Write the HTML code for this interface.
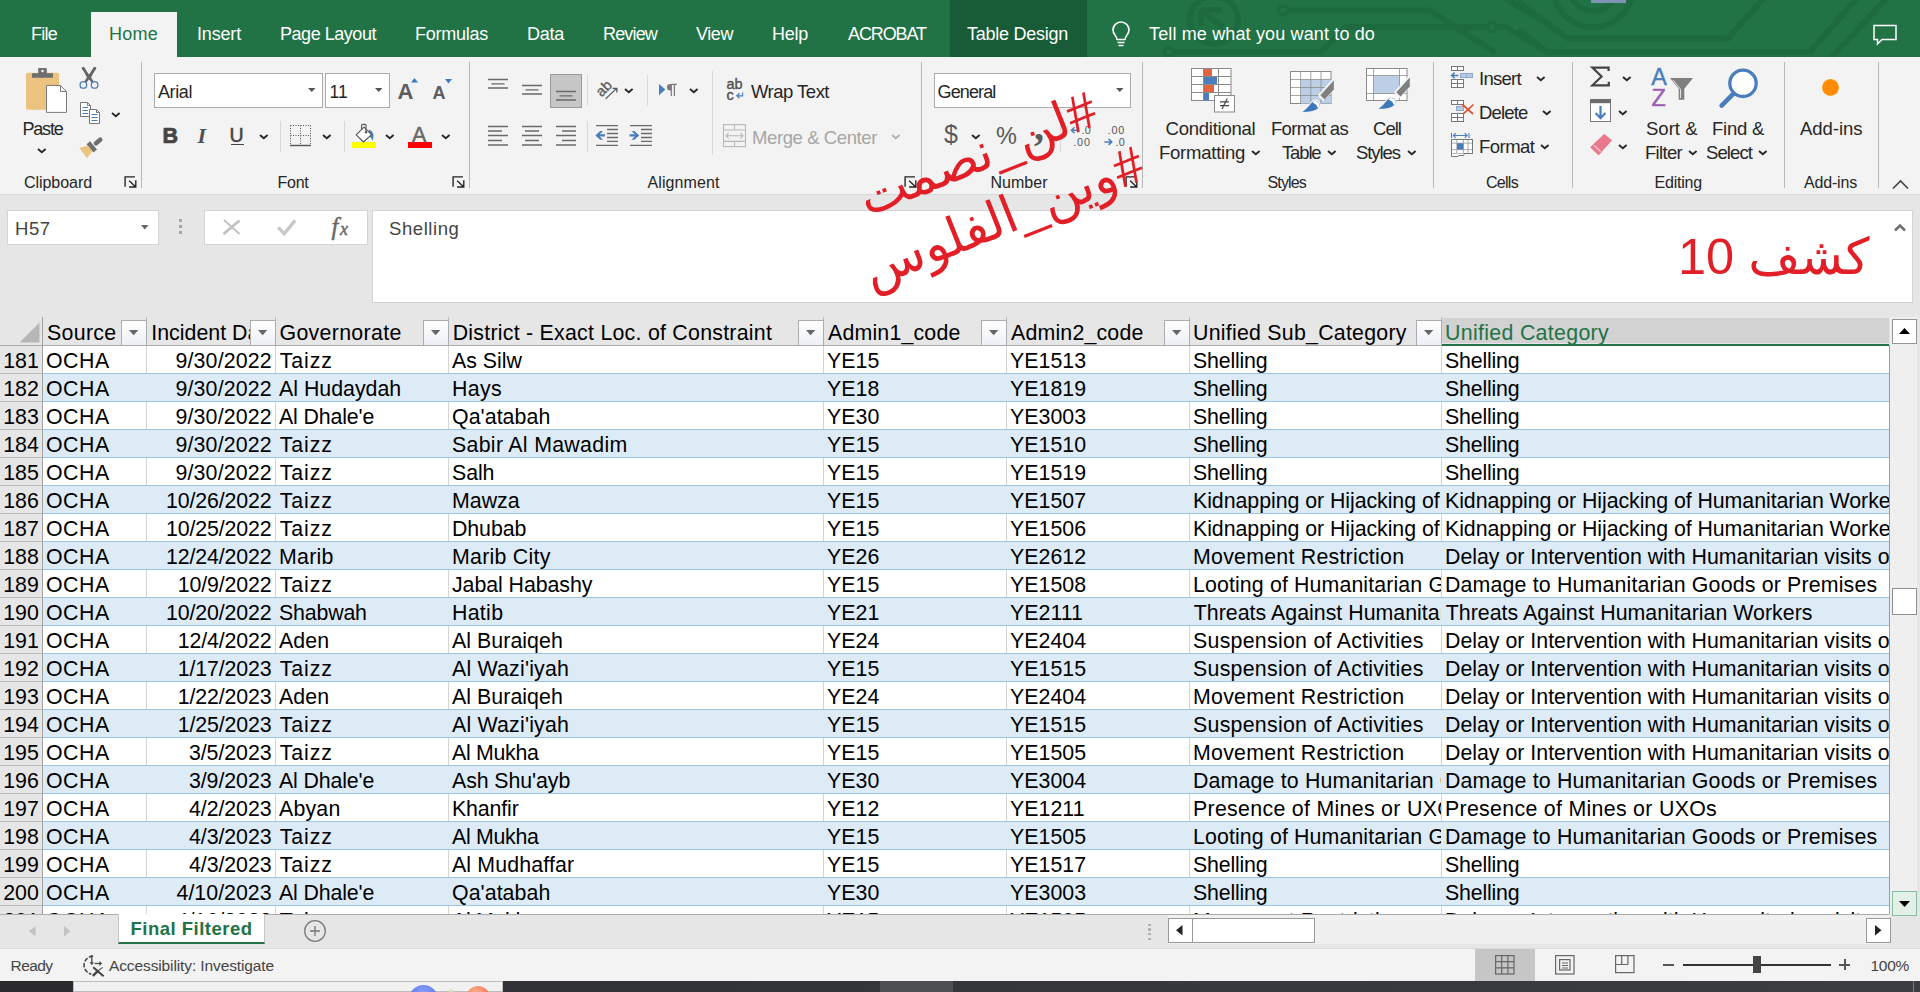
<!DOCTYPE html>
<html lang="en"><head><meta charset="utf-8"><title>Excel</title>
<style>
html,body{margin:0;padding:0;}
body{width:1920px;height:992px;overflow:hidden;position:relative;background:#e6e6e6;font-family:"Liberation Sans",sans-serif;}
.a{position:absolute;}
.t{white-space:pre;}
svg{position:absolute;overflow:visible;}
</style></head><body>
<div class="a" style="left:0px;top:0px;width:1920px;height:57px;background:#217346;"></div>
<svg style="left:1140px;top:0" width="780" height="57" viewBox="1140 0 780 57"><defs><clipPath id="tb"><rect x="1140" y="0" width="780" height="57"/></clipPath></defs>
<g clip-path="url(#tb)" fill="none" stroke="#1e6a3f" stroke-width="6" stroke-linejoin="round">
<circle cx="1214" cy="20" r="24"/>
<path d="M1223 27L1202 11M1201 10H1222M1201 10V26" stroke-width="5.5"/>
<circle cx="1283" cy="10.5" r="4.5" stroke-width="3.5"/>
<path d="M1288 10.5H1430L1496 53"/>
<circle cx="1169" cy="52" r="4.5" stroke-width="3.5"/>
<path d="M1174 52H1321L1346 27H1487"/>
<circle cx="1492" cy="27" r="4.5" stroke-width="3.5"/>
<path d="M1497 27H1506L1542 49"/>
<path d="M1506 -1L1545 22"/>
<circle cx="1593" cy="-12" r="39.5"/>
<circle cx="1593" cy="-12" r="23"/>
<path d="M1518 2L1568 38.5H1728L1763 -1"/>
<path d="M1518 30L1547 52H1810L1856 -1"/>
<path d="M1831 58L1886 -1"/>
</g><rect x="1591" y="0" width="35" height="3" fill="#7f93b5"/></svg>
<div class="a" style="left:91px;top:12px;width:86px;height:46px;background:#f3f3f3;"></div>
<div class="a" style="left:950px;top:0px;width:137px;height:57px;background:#185c37;"></div>
<span class="a t" style="top:24.00px;font-size:18px;line-height:20px;color:#fff;letter-spacing:-0.754px;left:31px;">File</span>
<span class="a t" style="top:24.00px;font-size:18px;line-height:20px;color:#217346;letter-spacing:0.246px;left:109px;">Home</span>
<span class="a t" style="top:24.00px;font-size:18px;line-height:20px;color:#fff;letter-spacing:-0.172px;left:197px;">Insert</span>
<span class="a t" style="top:24.00px;font-size:18px;line-height:20px;color:#fff;letter-spacing:-0.463px;left:280px;">Page Layout</span>
<span class="a t" style="top:24.00px;font-size:18px;line-height:20px;color:#fff;letter-spacing:-0.252px;left:415px;">Formulas</span>
<span class="a t" style="top:24.00px;font-size:18px;line-height:20px;color:#fff;letter-spacing:-0.258px;left:527px;">Data</span>
<span class="a t" style="top:24.00px;font-size:18px;line-height:20px;color:#fff;letter-spacing:-0.839px;left:603px;">Review</span>
<span class="a t" style="top:24.00px;font-size:18px;line-height:20px;color:#fff;letter-spacing:-0.426px;left:696px;">View</span>
<span class="a t" style="top:24.00px;font-size:18px;line-height:20px;color:#fff;letter-spacing:-0.258px;left:772px;">Help</span>
<span class="a t" style="top:24.00px;font-size:18px;line-height:20px;color:#fff;letter-spacing:-1.098px;left:848px;">ACROBAT</span>
<span class="a t" style="top:24.00px;font-size:18px;line-height:20px;color:#fff;letter-spacing:-0.255px;left:967px;">Table Design</span>
<span class="a t" style="top:24.00px;font-size:18px;line-height:20px;color:#fff;letter-spacing:0.144px;left:1149px;">Tell me what you want to do</span>
<svg style="left:1110px;top:21px" width="22" height="28" viewBox="0 0 22 28"><g fill="none" stroke="#fff" stroke-width="1.6">
<path d="M7 18.5C7 15 3 13.5 3 9A8 8 0 0 1 19 9C19 13.5 15 15 15 18.5Z" stroke-linejoin="round"/><path d="M7.5 21.5h7M8.5 24.5h5"/></g></svg>
<svg style="left:1873px;top:24px" width="24" height="22" viewBox="0 0 24 22"><path d="M1 1.5H23V15.5H9L4.5 20V15.5H1Z" fill="none" stroke="#fff" stroke-width="1.5" stroke-linejoin="miter"/></svg>
<div class="a" style="left:0px;top:57px;width:1920px;height:138px;background:#f3f3f3;"></div>
<span class="a t" style="top:119.00px;font-size:18px;line-height:20px;color:#262626;letter-spacing:-1.206px;left:22.5px;">Paste</span>
<svg style="left:37.4px;top:148.4px" width="9.6" height="6.3"><path d="M1 1L4.8 4.3L8.6 1" fill="none" stroke="#262626" stroke-width="1.8"/></svg>
<svg style="left:111.4px;top:112.4px" width="9.6" height="6.3"><path d="M1 1L4.8 4.3L8.6 1" fill="none" stroke="#262626" stroke-width="1.8"/></svg>
<span class="a t" style="top:174.00px;font-size:16px;line-height:17px;color:#262626;letter-spacing:-0.054px;left:24px;">Clipboard</span>
<svg style="left:124px;top:176px" width="13" height="13"><g fill="none" stroke="#222" stroke-width="1.35"><path d="M1.1 10.7V0.9H10.9"/><path d="M5.1 4.7L11.6 10.8M11.8 4.2V11H5.1"/></g></svg>
<div class="a" style="left:141px;top:62px;width:1px;height:126px;background:#b9b9b9;"></div>
<div class="a" style="left:154px;top:73px;width:169px;height:35px;background:#fff;border:1px solid #ababab;box-sizing:border-box;"></div>
<span class="a t" style="top:82.00px;font-size:18px;line-height:20px;color:#262626;letter-spacing:-0.403px;left:158px;">Arial</span>
<svg style="left:308px;top:88px" width="8" height="5"><path d="M0 0H7.5L3.75 4Z" fill="#555"/></svg>
<div class="a" style="left:325px;top:73px;width:65px;height:35px;background:#fff;border:1px solid #ababab;box-sizing:border-box;"></div>
<span class="a t" style="top:82.00px;font-size:17.5px;line-height:20px;color:#262626;left:329.5px;">11</span>
<svg style="left:375px;top:88px" width="8" height="5"><path d="M0 0H7.5L3.75 4Z" fill="#555"/></svg>
<span class="a t" style="top:79.00px;font-size:22px;line-height:25px;color:#5c5c5c;font-weight:700;left:397.5px;">A</span>
<svg style="left:411px;top:78px" width="8" height="5"><path d="M0 4.5H7L3.5 0Z" fill="#3d7ac0"/></svg>
<span class="a t" style="top:83.00px;font-size:18px;line-height:20px;color:#5c5c5c;font-weight:700;left:432.5px;">A</span>
<svg style="left:445px;top:79px" width="8" height="5"><path d="M0 0H7L3.5 4.5Z" fill="#3d7ac0"/></svg>
<span class="a t" style="top:124.00px;font-size:21.5px;line-height:24px;color:#444;font-weight:700;left:162.5px;-webkit-text-stroke:0.7px #444;">B</span>
<span class="a t" style="top:123.00px;font-size:22px;line-height:25px;color:#505050;font-weight:700;font-family:'Liberation Serif', serif;font-style:italic;left:197.5px;">I</span>
<span class="a t" style="top:124.00px;font-size:19.5px;line-height:22px;color:#444;left:229.5px;-webkit-text-stroke:0.5px #444;">U</span>
<div class="a" style="left:230.5px;top:143.5px;width:13.5px;height:1.5px;background:#444;"></div>
<svg style="left:259.4px;top:134.4px" width="9.6" height="6.3"><path d="M1 1L4.8 4.3L8.6 1" fill="none" stroke="#262626" stroke-width="1.8"/></svg>
<div class="a" style="left:280px;top:121px;width:1px;height:31px;background:#d8d8d8;"></div>
<svg style="left:322.4px;top:134.4px" width="9.6" height="6.3"><path d="M1 1L4.8 4.3L8.6 1" fill="none" stroke="#262626" stroke-width="1.8"/></svg>
<div class="a" style="left:344px;top:121px;width:1px;height:31px;background:#d8d8d8;"></div>
<svg style="left:385.4px;top:134.4px" width="9.6" height="6.3"><path d="M1 1L4.8 4.3L8.6 1" fill="none" stroke="#262626" stroke-width="1.8"/></svg>
<svg style="left:441.4px;top:134.4px" width="9.6" height="6.3"><path d="M1 1L4.8 4.3L8.6 1" fill="none" stroke="#262626" stroke-width="1.8"/></svg>
<span class="a t" style="top:174.00px;font-size:16px;line-height:17px;color:#262626;letter-spacing:-0.254px;left:277.5px;">Font</span>
<svg style="left:452px;top:176px" width="13" height="13"><g fill="none" stroke="#222" stroke-width="1.35"><path d="M1.1 10.7V0.9H10.9"/><path d="M5.1 4.7L11.6 10.8M11.8 4.2V11H5.1"/></g></svg>
<div class="a" style="left:469px;top:62px;width:1px;height:126px;background:#b9b9b9;"></div>
<div class="a" style="left:550px;top:74px;width:32px;height:34px;background:#c6c6c6;border:1px solid #9a9a9a;box-sizing:border-box;"></div>
<div class="a" style="left:587px;top:75px;width:1px;height:31px;background:#d8d8d8;"></div>
<svg style="left:624.4px;top:88.4px" width="9.6" height="6.3"><path d="M1 1L4.8 4.3L8.6 1" fill="none" stroke="#262626" stroke-width="1.8"/></svg>
<div class="a" style="left:647px;top:75px;width:1px;height:31px;background:#d8d8d8;"></div>
<svg style="left:689.4px;top:88.4px" width="9.6" height="6.3"><path d="M1 1L4.8 4.3L8.6 1" fill="none" stroke="#262626" stroke-width="1.8"/></svg>
<div class="a" style="left:712px;top:71px;width:1px;height:84px;background:#d8d8d8;"></div>
<span class="a t" style="top:81.00px;font-size:18.5px;line-height:21px;color:#262626;letter-spacing:-0.512px;left:751px;">Wrap Text</span>
<div class="a" style="left:587px;top:121px;width:1px;height:31px;background:#d8d8d8;"></div>
<span class="a t" style="top:127.00px;font-size:18.5px;line-height:21px;color:#a6a6a6;letter-spacing:-0.400px;left:752px;">Merge &amp; Center</span>
<svg style="left:891.4px;top:134.4px" width="9.6" height="6.3"><path d="M1 1L4.8 4.3L8.6 1" fill="none" stroke="#b0b0b0" stroke-width="1.8"/></svg>
<span class="a t" style="top:174.00px;font-size:16px;line-height:17px;color:#262626;letter-spacing:0.094px;left:647.5px;">Alignment</span>
<svg style="left:904px;top:176px" width="13" height="13"><g fill="none" stroke="#222" stroke-width="1.35"><path d="M1.1 10.7V0.9H10.9"/><path d="M5.1 4.7L11.6 10.8M11.8 4.2V11H5.1"/></g></svg>
<div class="a" style="left:921px;top:62px;width:1px;height:126px;background:#b9b9b9;"></div>
<div class="a" style="left:934px;top:73px;width:197px;height:35px;background:#fff;border:1px solid #ababab;box-sizing:border-box;"></div>
<span class="a t" style="top:82.00px;font-size:18px;line-height:20px;color:#262626;letter-spacing:-0.864px;left:937.5px;">General</span>
<svg style="left:1115.5px;top:88px" width="8" height="5"><path d="M0 0H7.5L3.75 4Z" fill="#555"/></svg>
<span class="a t" style="top:120.00px;font-size:25px;line-height:28px;color:#5a5a5a;letter-spacing:-1.906px;left:944px;">$</span>
<svg style="left:971.4px;top:134.4px" width="9.6" height="6.3"><path d="M1 1L4.8 4.3L8.6 1" fill="none" stroke="#262626" stroke-width="1.8"/></svg>
<span class="a t" style="top:123.00px;font-size:23.5px;line-height:26px;color:#5a5a5a;letter-spacing:-0.406px;left:996px;">%</span>
<span class="a t" style="top:105.00px;font-size:40px;line-height:44px;color:#5a5a5a;font-weight:700;font-family:'Liberation Serif', serif;left:1034px;">,</span>
<div class="a" style="left:1060px;top:121px;width:1px;height:31px;background:#d8d8d8;"></div>
<span class="a t" style="top:174.00px;font-size:16px;line-height:17px;color:#262626;letter-spacing:0.016px;left:990.5px;">Number</span>
<svg style="left:1124.5px;top:176px" width="13" height="13"><g fill="none" stroke="#222" stroke-width="1.35"><path d="M1.1 10.7V0.9H10.9"/><path d="M5.1 4.7L11.6 10.8M11.8 4.2V11H5.1"/></g></svg>
<div class="a" style="left:1142px;top:62px;width:1px;height:126px;background:#b9b9b9;"></div>
<span class="a t" style="top:118.00px;font-size:18.5px;line-height:21px;color:#262626;letter-spacing:-0.234px;left:1165.5px;">Conditional</span>
<span class="a t" style="top:142.00px;font-size:18.5px;line-height:21px;color:#262626;letter-spacing:-0.242px;left:1159px;">Formatting</span>
<svg style="left:1251.4px;top:150.4px" width="9.6" height="6.3"><path d="M1 1L4.8 4.3L8.6 1" fill="none" stroke="#262626" stroke-width="1.8"/></svg>
<span class="a t" style="top:118.00px;font-size:18.5px;line-height:21px;color:#262626;letter-spacing:-0.698px;left:1271px;">Format as</span>
<span class="a t" style="top:142.00px;font-size:18.5px;line-height:21px;color:#262626;letter-spacing:-1.147px;left:1282px;">Table</span>
<svg style="left:1326.9px;top:150.4px" width="9.6" height="6.3"><path d="M1 1L4.8 4.3L8.6 1" fill="none" stroke="#262626" stroke-width="1.8"/></svg>
<span class="a t" style="top:118.00px;font-size:18.5px;line-height:21px;color:#262626;letter-spacing:-0.969px;left:1373px;">Cell</span>
<span class="a t" style="top:142.00px;font-size:18.5px;line-height:21px;color:#262626;letter-spacing:-1.065px;left:1356px;">Styles</span>
<svg style="left:1406.9px;top:150.4px" width="9.6" height="6.3"><path d="M1 1L4.8 4.3L8.6 1" fill="none" stroke="#262626" stroke-width="1.8"/></svg>
<span class="a t" style="top:174.00px;font-size:16px;line-height:17px;color:#262626;letter-spacing:-0.846px;left:1267.5px;">Styles</span>
<div class="a" style="left:1433px;top:62px;width:1px;height:126px;background:#b9b9b9;"></div>
<span class="a t" style="top:68.00px;font-size:18.5px;line-height:21px;color:#262626;letter-spacing:-0.714px;left:1479px;">Insert</span>
<svg style="left:1536.4px;top:75.9px" width="9.6" height="6.3"><path d="M1 1L4.8 4.3L8.6 1" fill="none" stroke="#262626" stroke-width="1.8"/></svg>
<span class="a t" style="top:102.00px;font-size:18.5px;line-height:21px;color:#262626;letter-spacing:-0.831px;left:1479px;">Delete</span>
<svg style="left:1542.4px;top:109.9px" width="9.6" height="6.3"><path d="M1 1L4.8 4.3L8.6 1" fill="none" stroke="#262626" stroke-width="1.8"/></svg>
<span class="a t" style="top:136.00px;font-size:18.5px;line-height:21px;color:#262626;letter-spacing:-0.516px;left:1479px;">Format</span>
<svg style="left:1540.4px;top:143.9px" width="9.6" height="6.3"><path d="M1 1L4.8 4.3L8.6 1" fill="none" stroke="#262626" stroke-width="1.8"/></svg>
<span class="a t" style="top:174.00px;font-size:16px;line-height:17px;color:#262626;letter-spacing:-0.713px;left:1486px;">Cells</span>
<div class="a" style="left:1572px;top:62px;width:1px;height:126px;background:#b9b9b9;"></div>
<svg style="left:1622.4px;top:76.4px" width="9.6" height="6.3"><path d="M1 1L4.8 4.3L8.6 1" fill="none" stroke="#262626" stroke-width="1.8"/></svg>
<svg style="left:1618.4px;top:110.4px" width="9.6" height="6.3"><path d="M1 1L4.8 4.3L8.6 1" fill="none" stroke="#262626" stroke-width="1.8"/></svg>
<svg style="left:1618.4px;top:144.4px" width="9.6" height="6.3"><path d="M1 1L4.8 4.3L8.6 1" fill="none" stroke="#262626" stroke-width="1.8"/></svg>
<span class="a t" style="top:118.00px;font-size:18.5px;line-height:21px;color:#262626;letter-spacing:0.013px;left:1646px;">Sort &amp;</span>
<span class="a t" style="top:142.00px;font-size:18.5px;line-height:21px;color:#262626;letter-spacing:-0.688px;left:1645px;">Filter</span>
<svg style="left:1688.4px;top:150.4px" width="9.6" height="6.3"><path d="M1 1L4.8 4.3L8.6 1" fill="none" stroke="#262626" stroke-width="1.8"/></svg>
<span class="a t" style="top:118.00px;font-size:18.5px;line-height:21px;color:#262626;letter-spacing:-0.245px;left:1712px;">Find &amp;</span>
<span class="a t" style="top:142.00px;font-size:18.5px;line-height:21px;color:#262626;letter-spacing:-0.904px;left:1706px;">Select</span>
<svg style="left:1758.4px;top:150.4px" width="9.6" height="6.3"><path d="M1 1L4.8 4.3L8.6 1" fill="none" stroke="#262626" stroke-width="1.8"/></svg>
<span class="a t" style="top:174.00px;font-size:16px;line-height:17px;color:#262626;letter-spacing:-0.203px;left:1654.5px;">Editing</span>
<div class="a" style="left:1784px;top:62px;width:1px;height:126px;background:#b9b9b9;"></div>
<div class="a" style="left:1821.5px;top:78.5px;width:17px;height:17px;border-radius:50%;background:radial-gradient(circle,#ff8c00 0,#ff8c00 62%,rgba(255,140,0,0) 100%);"></div>
<span class="a t" style="top:118.00px;font-size:18.5px;line-height:21px;color:#262626;letter-spacing:-0.033px;left:1800px;">Add-ins</span>
<span class="a t" style="top:174.00px;font-size:16px;line-height:17px;color:#262626;letter-spacing:-0.179px;left:1804px;">Add-ins</span>
<div class="a" style="left:1878px;top:62px;width:1px;height:126px;background:#b9b9b9;"></div>
<svg style="left:1892px;top:179px" width="17" height="11"><path d="M1 9.5L8.5 2L16 9.5" fill="none" stroke="#444" stroke-width="1.7"/></svg>
<svg style="left:0px;top:0px" width="1" height="1">
<rect x="26" y="72.7" width="33" height="37" rx="1.6" fill="#ebc27e"/>
<path d="M32 73.2H38.2V68.8Q38.2 68 39 68H46Q46.8 68 46.8 68.8V73.2H53V77.8H32Z" fill="#6e6e6e"/>
<circle cx="42.5" cy="71" r="1.3" fill="#f3f3f3"/>
<path d="M46.5 85.5H60.5L66.5 91.5V112.4H46.5Z" fill="#fff" stroke="#7a7a7a" stroke-width="1"/>
<path d="M60.5 85.5V91.5H66.5" fill="none" stroke="#7a7a7a" stroke-width="1"/>
</svg>
<svg style="left:0px;top:0px" width="1" height="1">
<path d="M82.5 67.5L92.6 82M95.5 67.5L85.4 82" stroke="#666" stroke-width="2.6" fill="none" stroke-linecap="butt"/>
<path d="M82 67L84.6 67.6L90 78L88 80Z M96 67L93.4 67.6L88 78L90 80Z" fill="#666"/>
<circle cx="83.4" cy="84.9" r="3.3" fill="none" stroke="#4a7ebb" stroke-width="1.3"/>
<circle cx="94.6" cy="84.9" r="3.3" fill="none" stroke="#4a7ebb" stroke-width="1.3"/>
</svg>
<svg style="left:0px;top:0px" width="1" height="1">
<path d="M80.5 102.5H87.5L90.5 105.5V116.5H80.5Z" fill="#fff" stroke="#777" stroke-width="1"/>
<path d="M87.5 102.5V105.5H90.5" fill="none" stroke="#777"/>
<path d="M82.5 107.5H88M82.5 110.5H88M82.5 113.5H88" stroke="#4a7ebb" stroke-width="1"/>
<path d="M89.5 109.5H96.5L99.5 112.5V123.5H89.5Z" fill="#fff" stroke="#777" stroke-width="1"/>
<path d="M96.5 109.5V112.5H99.5" fill="none" stroke="#777"/>
<path d="M91.5 114.5H97.5M91.5 117.5H97.5M91.5 120.5H97.5" stroke="#4a7ebb" stroke-width="1"/>
</svg>
<svg style="left:0px;top:0px" width="1" height="1">
<path d="M96 143.2L100.2 139.7" stroke="#6e6e6e" stroke-width="4.6" stroke-linecap="round"/>
<path d="M97 149.4L93.4 152.4L86.5 144.2L90.1 141.2Z" fill="#6e6e6e"/>
<path d="M87.8 145.4L92.6 151.2L86.9 157.9L79.5 147.9Z" fill="#ebc27e"/>
</svg>
<svg style="left:0px;top:0px" width="1" height="1">
<path d="M290.5 125.5H311M290.5 135.5H311M290.5 125.5V145M300.5 125.5V145M310.5 125.5V145" stroke="#555" stroke-width="1" stroke-dasharray="1 1.5" fill="none"/>
<path d="M290 145.5H311" stroke="#555" stroke-width="1.4"/></svg>
<svg style="left:0px;top:0px" width="1" height="1">
<rect x="352" y="142" width="24" height="6" fill="#ffff00"/>
<path d="M369 129.5Q375.5 132 372.5 141Q371 137 368 135Z" fill="#4a7ebb"/>
<path d="M364 127.2L371.5 134.7L363.5 142L356.2 134.8Z" fill="#fff" stroke="#555" stroke-width="1.1" stroke-linejoin="round"/>
<path d="M361.6 129.5V125.6Q361.6 124.4 362.8 124.4H364.8Q366 124.4 366 125.6V132" fill="none" stroke="#555" stroke-width="1.1"/>
<circle cx="366" cy="132.3" r="1.2" fill="#555"/>
</svg>
<svg style="left:0px;top:0px" width="1" height="1"><rect x="408" y="142" width="24" height="6" fill="#ff0000"/></svg>
<span class="a t" style="top:123.00px;font-size:21.5px;line-height:24px;color:#686868;left:412px;-webkit-text-stroke:0.5px #686868;">A</span>
<svg style="left:0;top:0" width="1" height="1"><path d="M488.0 79.5H508.0M491.5 83.8H504.5M488.0 88H508.0" stroke="#6a6a6a" stroke-width="1.3" fill="none"/></svg>
<svg style="left:0;top:0" width="1" height="1"><path d="M522.0 85.5H542.0M525.5 89.8H538.5M522.0 94H542.0" stroke="#6a6a6a" stroke-width="1.3" fill="none"/></svg>
<svg style="left:0;top:0" width="1" height="1"><path d="M556.0 91.5H576.0M559.5 95.8H572.5M556.0 100H576.0" stroke="#6a6a6a" stroke-width="1.3" fill="none"/></svg>
<svg style="left:0;top:0" width="1" height="1"><path d="M488 126.5H508M488 131H502M488 135.5H508M488 140.5H502M488 145H508" stroke="#6a6a6a" stroke-width="1.3" fill="none"/></svg>
<svg style="left:0;top:0" width="1" height="1"><path d="M522.0 126.5H542.0M525.0 131H539.0M522.0 135.5H542.0M525.0 140.5H539.0M522.0 145H542.0" stroke="#6a6a6a" stroke-width="1.3" fill="none"/></svg>
<svg style="left:0;top:0" width="1" height="1"><path d="M556 126.5H576M562 131H576M556 135.5H576M562 140.5H576M556 145H576" stroke="#6a6a6a" stroke-width="1.3" fill="none"/></svg>
<svg style="left:0;top:0" width="1" height="1"><path d="M596 125.6H618M607 129.5H618M607 133.5H618M607 137.5H618M607 141.4H618M596 145.4H618" stroke="#6a6a6a" stroke-width="1.3" fill="none"/></svg>
<svg style="left:0;top:0" width="1" height="1"><path d="M630 125.6H652M641 129.5H652M641 133.5H652M641 137.5H652M641 141.4H652M630 145.4H652" stroke="#6a6a6a" stroke-width="1.3" fill="none"/></svg>
<svg style="left:0px;top:0px" width="1" height="1">
<path d="M595.4 135.4L600.2 131H603L599.8 134.2H605V136.6H599.8L603 139.8H600.2Z" fill="#4a7ebb"/>
<path d="M639.2 135.4L634.4 131H631.6L634.8 134.2H629.6V136.6H634.8L631.6 139.8H634.4Z" fill="#4a7ebb"/>
</svg>
<span class="a t" style="left:596px;top:80.6px;font-size:14.5px;line-height:15px;color:#595959;-webkit-text-stroke:0.3px #595959;transform:rotate(-45deg);transform-origin:50% 50%;">ab</span>
<svg style="left:0px;top:0px" width="1" height="1"><path d="M605.6 98.9L616.4 88.6M612.6 88.3H616.9V92.4" stroke="#555" stroke-width="1.3" fill="none"/></svg>
<svg style="left:0px;top:0px" width="1" height="1">
<path d="M659 84V95.2L665.4 89.6Z" fill="#4a7ebb"/>
<path d="M671.3 84.3H677M671.3 84V96M674.4 84V96" stroke="#7a7a7a" stroke-width="1.2" fill="none"/>
<path d="M671.3 84H670.3A3.3 3.3 0 0 0 670.3 90.6H671.3Z" fill="#7a7a7a"/>
</svg>
<span class="a t" style="top:76.00px;font-size:14.5px;line-height:16px;color:#505050;left:726.5px;-webkit-text-stroke:0.35px #505050;">ab</span>
<span class="a t" style="top:87.00px;font-size:14.5px;line-height:16px;color:#505050;left:726.5px;-webkit-text-stroke:0.35px #505050;">c</span>
<svg style="left:0px;top:0px" width="1" height="1"><path d="M742.6 92.4V95.8H737M739.6 93.2L736.8 95.8L739.6 98.4" stroke="#4a7ebb" stroke-width="1.2" fill="none"/></svg>
<svg style="left:0px;top:0px" width="1" height="1">
<g stroke="#b8b8b8" stroke-width="1.1" fill="none"><rect x="723.5" y="124.6" width="22" height="22"/>
<path d="M723.5 130H745.5M723.5 141.4H745.5M734.5 124.6V130M734.5 141.4V146.6"/>
<path d="M726 135.7H743M728.6 133L726 135.7L728.6 138.4M740.4 133L743 135.7L740.4 138.4"/></g></svg>
<span class="a t" style="top:124.00px;font-size:10.8px;line-height:12px;color:#555;letter-spacing:0.292px;left:1081.4px;">.0</span>
<span class="a t" style="top:136.00px;font-size:10.8px;line-height:12px;color:#555;letter-spacing:0.861px;left:1073.2px;">.00</span>
<span class="a t" style="top:124.00px;font-size:10.8px;line-height:12px;color:#555;letter-spacing:0.861px;left:1107.6px;">.00</span>
<span class="a t" style="top:136.00px;font-size:10.8px;line-height:12px;color:#555;letter-spacing:0.292px;left:1115.4px;">.0</span>
<svg style="left:0px;top:0px" width="1" height="1">
<path d="M1079 130.3H1071.5M1074.6 127.3L1071.4 130.3L1074.6 133.3" stroke="#4a7ebb" stroke-width="1.5" fill="none"/>
<path d="M1104.4 141.9H1111.6M1108.6 138.9L1111.8 141.9L1108.6 144.9" stroke="#4a7ebb" stroke-width="1.5" fill="none"/></svg>
<svg style="left:0px;top:0px" width="1" height="1">
<rect x="1191.5" y="68.5" width="39.5" height="32" fill="#fff" stroke="#8a8a8a"/>
<rect x="1204" y="69" width="8" height="7.5" fill="#e0643f"/><rect x="1204" y="77" width="13" height="7.5" fill="#4a7ebb"/>
<rect x="1204" y="85" width="10" height="7.5" fill="#e0643f"/><rect x="1204" y="93" width="5" height="7.5" fill="#4a7ebb"/>
<path d="M1191.5 76.5H1231M1191.5 84.5H1231M1191.5 92.5H1231M1203.5 68.5V100.5M1218.5 68.5V100.5" stroke="#8a8a8a" fill="none"/>
<rect x="1214.5" y="95.5" width="20" height="16.5" fill="#fff" stroke="#8a8a8a"/>
<path d="M1220 101.8H1229M1220 105.6H1229M1227.3 98.6L1222 109" stroke="#444" stroke-width="1.2" fill="none"/>
</svg>
<svg style="left:0px;top:0px" width="1" height="1">
<rect x="1290.5" y="71.5" width="40.5" height="32" fill="#fff" stroke="#8a8a8a"/>
<rect x="1300.6" y="79.5" width="30.4" height="24" fill="#bccfe7"/>
<path d="M1290.5 79.5H1331M1290.5 87.5H1331M1290.5 95.5H1331M1300.6 71.5V103.5M1310.8 71.5V103.5M1321 71.5V103.5" stroke="#8a8a8a" fill="none" opacity="0.75"/>
<path d="M1318 95L1332 79.5L1334.5 81.5V90L1323.5 101Z" fill="#f3f3f3"/>
<path d="M1320.3 95.3L1333.8 80.4V89.6L1324.6 99.4Z" fill="#7f7f7f"/>
<path d="M1319 96.5L1323.5 100.5" stroke="#f3f3f3" stroke-width="1.4"/>
<path d="M1301 112.6Q1308 107 1311 102.5Q1315 98.5 1319 101.5Q1322 105.5 1317.5 109.5Q1313 112.8 1301 112.6Z" fill="#3d78ba" stroke="#f3f3f3" stroke-width="1.2"/>
<path d="M1312.5 102.2Q1315.5 99.8 1318.3 102Q1320.6 105 1318 108.2Q1316.5 104 1312.5 102.2Z" fill="#fff"/>
</svg>
<svg style="left:0px;top:0px" width="1" height="1">
<rect x="1366.5" y="68.5" width="40.5" height="32" fill="#fff" stroke="#8a8a8a"/>
<rect x="1373.5" y="75.5" width="26" height="18" fill="#bccfe7"/>
<path d="M1366.5 75.5H1407M1366.5 93.5H1407M1373.5 68.5V100.5M1399.5 68.5V100.5" stroke="#8a8a8a" fill="none" opacity="0.75"/>
<path d="M1394 92L1408 76.5L1410.5 78.5V87L1399.5 98Z" fill="#f3f3f3"/>
<path d="M1396.3 92.3L1409.8 77.4V86.6L1400.6 96.4Z" fill="#7f7f7f"/>
<path d="M1395 93.5L1399.5 97.5" stroke="#f3f3f3" stroke-width="1.4"/>
<path d="M1377 109.6Q1384 104 1387 99.5Q1391 95.5 1395 98.5Q1398 102.5 1393.5 106.5Q1389 109.8 1377 109.6Z" fill="#3d78ba" stroke="#f3f3f3" stroke-width="1.2"/>
<path d="M1388.5 99.2Q1391.5 96.8 1394.3 99Q1396.6 102 1394 105.2Q1392.5 101 1388.5 99.2Z" fill="#fff"/>
</svg>
<svg style="left:0px;top:0px" width="1" height="1">
<g stroke="#777" fill="#fff" stroke-width="1">
<rect x="1451.5" y="66.5" width="12" height="4"/><path d="M1457.5 66.5V70.5"/>
<rect x="1451.5" y="79.5" width="12" height="8"/><path d="M1457.5 79.5V87.5M1451.5 83.5H1463.5"/>
<rect x="1460.5" y="73.5" width="12" height="4" fill="#b9cbe4" stroke="#8fa9cc"/><path d="M1466.5 73.5V77.5" stroke="#8fa9cc"/>
</g>
<path d="M1458.4 75.4H1451.8M1454.6 72.6L1451.6 75.4L1454.6 78.2" stroke="#4a7ebb" stroke-width="1.5" fill="none"/>
<g stroke="#777" fill="#fff" stroke-width="1">
<rect x="1451.5" y="100.5" width="12" height="4"/><path d="M1457.5 100.5V104.5"/>
<rect x="1451.5" y="113.5" width="12" height="8"/><path d="M1457.5 113.5V121.5M1451.5 117.5H1463.5"/>
<rect x="1456.5" y="106.5" width="7" height="4" fill="#b9cbe4" stroke="#8fa9cc"/>
</g>
<path d="M1462.5 104.5L1473 114M1473.5 104.5L1463 114.2" stroke="#d9532c" stroke-width="1.7" fill="none"/>
<g stroke="#777" fill="#fff" stroke-width="1">
<rect x="1451.5" y="139.5" width="21" height="14"/>
<path d="M1451.5 143.2H1472.5M1451.5 149.6H1472.5M1456.8 139.5V153.5M1463.4 139.5V153.5M1468 139.5V153.5" opacity="0.6"/>
<path d="M1451.5 153.5V156.5H1458L1458.6 155.5H1463.5L1464.5 153.5" fill="#fff"/>
</g>
<rect x="1457" y="143.2" width="6.4" height="6.4" fill="#4a7ebb"/>
<path d="M1451.5 133V138M1469 133V138M1453.5 135.5H1467M1455.8 133.2L1453.4 135.5L1455.8 137.8M1464.7 133.2L1467.1 135.5L1464.7 137.8" stroke="#4a7ebb" stroke-width="1.1" fill="none"/>
</svg>
<svg style="left:0px;top:0px" width="1" height="1">
<path d="M1608.6 71V67.6H1592.4L1601.6 76.5L1592.4 85.3H1608.8V81.8" fill="none" stroke="#444" stroke-width="2.2" stroke-linejoin="miter"/>
<rect x="1590.5" y="99.5" width="20" height="22" fill="#fff" stroke="#7a7a7a"/>
<rect x="1590" y="99" width="21" height="4.2" fill="#6d6d6d"/>
<path d="M1600.5 106V117.5M1595.6 113L1600.5 118.2L1605.4 113" stroke="#4a7ebb" stroke-width="2.2" fill="none"/>
<path d="M1604.3 134.6L1611.2 140.4L1598.5 154.5L1591.1 147.3Z" fill="#e8788c" stroke="#e8788c" stroke-width="1.2" stroke-linejoin="round"/>
<path d="M1594 145.2L1600.6 151.6" stroke="#f7d5db" stroke-width="1.1"/>
<path d="M1670 78H1693L1684.3 88.8V99.7H1678.7V88.8Z" fill="#7f7f7f"/>
<path d="M1673 80L1680.6 89.4V98" stroke="#e9e9e9" stroke-width="1" fill="none"/>
<circle cx="1743" cy="83.3" r="13.2" fill="#fff" stroke="#4a7ebb" stroke-width="3.3"/>
<path d="M1733 94.2L1721.6 105.6" stroke="#4a7ebb" stroke-width="4.6" stroke-linecap="round"/>
</svg>
<span class="a t" style="top:64.00px;font-size:23.5px;line-height:26px;color:#4a7ebb;left:1651.3px;-webkit-text-stroke:0.4px #4a7ebb;">A</span>
<span class="a t" style="top:85.00px;font-size:23.5px;line-height:26px;color:#9b5fb5;left:1651.6px;-webkit-text-stroke:0.4px #9b5fb5;">Z</span>
<div class="a" style="left:0px;top:194px;width:1920px;height:1px;background:#d8d8d8;"></div>
<div class="a" style="left:7px;top:210px;width:152px;height:35px;background:#fff;border:1px solid #d4d4d4;box-sizing:border-box;"></div>
<span class="a t" style="top:218.00px;font-size:18.5px;line-height:21px;color:#444;letter-spacing:0.516px;left:15px;">H57</span>
<svg style="left:141px;top:225px" width="8" height="5"><path d="M0 0H7.5L3.75 4.5Z" fill="#666"/></svg>
<div class="a" style="left:179px;top:219px;width:3px;height:3px;background:#a6a6a6;"></div>
<div class="a" style="left:179px;top:225px;width:3px;height:3px;background:#a6a6a6;"></div>
<div class="a" style="left:179px;top:231px;width:3px;height:3px;background:#a6a6a6;"></div>
<div class="a" style="left:204px;top:210px;width:164px;height:35px;background:#fff;border:1px solid #d4d4d4;box-sizing:border-box;"></div>
<svg style="left:222px;top:219px" width="19" height="16"><path d="M2 1L17.5 15" stroke="#c0c0c0" stroke-width="1.7" fill="none"/><path d="M17.5 1.5L1.5 15" stroke="#c0c0c0" stroke-width="2.8" fill="none"/></svg>
<svg style="left:277px;top:219px" width="20" height="17"><path d="M1.2 8.4L7.2 14.6L18.2 1.4" stroke="#c8c8c8" stroke-width="3.4" fill="none"/></svg>
<span class="a t" style="top:213.00px;font-size:24.5px;line-height:27px;color:#686868;font-family:'Liberation Serif', serif;font-style:italic;left:331.5px;-webkit-text-stroke:0.45px #686868;">f</span>
<span class="a t" style="top:219.00px;font-size:18px;line-height:20px;color:#686868;font-family:'Liberation Serif', serif;font-style:italic;left:340px;-webkit-text-stroke:0.45px #686868;">x</span>
<div class="a" style="left:372px;top:210px;width:1541px;height:93px;background:#fff;border:1px solid #d4d4d4;box-sizing:border-box;"></div>
<span class="a t" style="top:218.00px;font-size:18.5px;line-height:21px;color:#444;letter-spacing:0.584px;left:389px;">Shelling</span>
<svg style="left:1894px;top:223px" width="12" height="9"><path d="M1 7.5L6 2.5L11 7.5" stroke="#707070" stroke-width="2.6" fill="none"/></svg>
<div class="a" style="left:0;top:317px;width:1889px;height:597px;overflow:hidden;background:#fff;font-size:21.33px;line-height:28px;color:#000;">
<div class="a" style="left:0;top:0;width:1889px;height:28px;background:#e6e6e6;"></div>
<div class="a" style="left:1442px;top:1px;width:447px;height:25px;background:#d2d2d2;"></div>
<div class="a" style="left:1442px;top:27px;width:447px;height:2px;background:#217346;"></div>
<div class="a" style="left:0;top:28px;width:1441px;height:1px;background:#ababab;"></div>
<div class="a" style="left:42px;top:0;width:1px;height:28px;background:#bdbdbd;"></div>
<div class="a" style="left:146px;top:0;width:1px;height:28px;background:#bdbdbd;"></div>
<div class="a" style="left:275px;top:0;width:1px;height:28px;background:#bdbdbd;"></div>
<div class="a" style="left:448px;top:0;width:1px;height:28px;background:#bdbdbd;"></div>
<div class="a" style="left:823px;top:0;width:1px;height:28px;background:#bdbdbd;"></div>
<div class="a" style="left:1006px;top:0;width:1px;height:28px;background:#bdbdbd;"></div>
<div class="a" style="left:1189px;top:0;width:1px;height:28px;background:#bdbdbd;"></div>
<div class="a" style="left:1441px;top:0;width:1px;height:28px;background:#bdbdbd;"></div>
<svg style="left:19px;top:5px" width="21" height="21"><path d="M20.5 0.5V20.5H0.5Z" fill="#b7b7b7"/></svg>
<div class="a" style="left:43px;top:1px;width:78px;height:27px;overflow:hidden;"><div class="a t" style="left:4px;top:0;color:#000;line-height:31px;letter-spacing:0.32px;">Source</div></div>
<div class="a" style="left:147px;top:1px;width:103px;height:27px;overflow:hidden;"><div class="a t" style="left:4.3px;top:0;color:#000;line-height:31px;letter-spacing:0.02px;">Incident Date</div></div>
<div class="a" style="left:276px;top:1px;width:147px;height:27px;overflow:hidden;"><div class="a t" style="left:3.5px;top:0;color:#000;line-height:31px;letter-spacing:0.32px;">Governorate</div></div>
<div class="a" style="left:449px;top:1px;width:349px;height:27px;overflow:hidden;"><div class="a t" style="left:3.7px;top:0;color:#000;line-height:31px;letter-spacing:0.254px;">District - Exact Loc. of Constraint</div></div>
<div class="a" style="left:824px;top:1px;width:157px;height:27px;overflow:hidden;"><div class="a t" style="left:4px;top:0;color:#000;line-height:31px;letter-spacing:0.19px;">Admin1_code</div></div>
<div class="a" style="left:1007px;top:1px;width:157px;height:27px;overflow:hidden;"><div class="a t" style="left:4px;top:0;color:#000;line-height:31px;letter-spacing:0.19px;">Admin2_code</div></div>
<div class="a" style="left:1190px;top:1px;width:226px;height:27px;overflow:hidden;"><div class="a t" style="left:3px;top:0;color:#000;line-height:31px;letter-spacing:0.25px;">Unified Sub_Category</div></div>
<div class="a" style="left:1442px;top:1px;width:447px;height:27px;overflow:hidden;"><div class="a t" style="left:3px;top:0;color:#217346;line-height:31px;letter-spacing:0.32px;">Unified Category</div></div>
<div class="a" style="left:121px;top:3px;width:26px;height:26px;box-sizing:border-box;border:1px solid #a9adb2;background:linear-gradient(#ffffff,#f7f8fa 45%,#eceff4);"></div>
<svg style="left:128.75px;top:13px" width="10" height="6"><path d="M0 0H9.3L4.65 5.2Z" fill="#666"/></svg>
<div class="a" style="left:250px;top:3px;width:26px;height:26px;box-sizing:border-box;border:1px solid #a9adb2;background:linear-gradient(#ffffff,#f7f8fa 45%,#eceff4);"></div>
<svg style="left:257.75px;top:13px" width="10" height="6"><path d="M0 0H9.3L4.65 5.2Z" fill="#666"/></svg>
<div class="a" style="left:423px;top:3px;width:26px;height:26px;box-sizing:border-box;border:1px solid #a9adb2;background:linear-gradient(#ffffff,#f7f8fa 45%,#eceff4);"></div>
<svg style="left:430.75px;top:13px" width="10" height="6"><path d="M0 0H9.3L4.65 5.2Z" fill="#666"/></svg>
<div class="a" style="left:798px;top:3px;width:26px;height:26px;box-sizing:border-box;border:1px solid #a9adb2;background:linear-gradient(#ffffff,#f7f8fa 45%,#eceff4);"></div>
<svg style="left:805.75px;top:13px" width="10" height="6"><path d="M0 0H9.3L4.65 5.2Z" fill="#666"/></svg>
<div class="a" style="left:981px;top:3px;width:26px;height:26px;box-sizing:border-box;border:1px solid #a9adb2;background:linear-gradient(#ffffff,#f7f8fa 45%,#eceff4);"></div>
<svg style="left:988.75px;top:13px" width="10" height="6"><path d="M0 0H9.3L4.65 5.2Z" fill="#666"/></svg>
<div class="a" style="left:1164px;top:3px;width:26px;height:26px;box-sizing:border-box;border:1px solid #a9adb2;background:linear-gradient(#ffffff,#f7f8fa 45%,#eceff4);"></div>
<svg style="left:1171.75px;top:13px" width="10" height="6"><path d="M0 0H9.3L4.65 5.2Z" fill="#666"/></svg>
<div class="a" style="left:1416px;top:3px;width:26px;height:26px;box-sizing:border-box;border:1px solid #a9adb2;background:linear-gradient(#ffffff,#f7f8fa 45%,#eceff4);"></div>
<svg style="left:1423.75px;top:13px" width="10" height="6"><path d="M0 0H9.3L4.65 5.2Z" fill="#666"/></svg>
<div class="a" style="left:0;top:29px;width:42px;height:27px;background:#e6e6e6;text-align:center;line-height:30px;">181</div>
<div class="a" style="left:0;top:56px;width:42px;height:1px;background:#bcbcbc;"></div>
<div class="a" style="left:43px;top:29px;width:1846px;height:27px;background:#fff;"></div>
<div class="a" style="left:43px;top:56px;width:1846px;height:1px;background:#9dc3e6;"></div>
<div class="a t" style="left:43px;top:29px;width:103px;height:27px;overflow:hidden;box-sizing:border-box;line-height:30px;padding:0 0 0 3px;letter-spacing:0.500px;">OCHA</div>
<div class="a t" style="left:147px;top:29px;width:128px;height:27px;overflow:hidden;box-sizing:border-box;line-height:30px;text-align:right;padding:0 3.25px 0 0;letter-spacing:0.150px;">9/30/2022</div>
<div class="a t" style="left:276px;top:29px;width:172px;height:27px;overflow:hidden;box-sizing:border-box;line-height:30px;padding:0 0 0 3.8px;letter-spacing:0.900px;">Taizz</div>
<div class="a t" style="left:449px;top:29px;width:374px;height:27px;overflow:hidden;box-sizing:border-box;line-height:30px;padding:0 0 0 3px;letter-spacing:0.000px;">As Silw</div>
<div class="a t" style="left:824px;top:29px;width:182px;height:27px;overflow:hidden;box-sizing:border-box;line-height:30px;padding:0 0 0 3px;letter-spacing:0.050px;">YE15</div>
<div class="a t" style="left:1007px;top:29px;width:182px;height:27px;overflow:hidden;box-sizing:border-box;line-height:30px;padding:0 0 0 3px;letter-spacing:0.050px;">YE1513</div>
<div class="a t" style="left:1190px;top:29px;width:251px;height:27px;overflow:hidden;box-sizing:border-box;line-height:30px;padding:0 0 0 3px;letter-spacing:-0.186px;">Shelling</div>
<div class="a t" style="left:1442px;top:29px;width:447px;height:27px;overflow:hidden;box-sizing:border-box;line-height:30px;padding:0 0 0 3px;letter-spacing:-0.186px;">Shelling</div>
<div class="a" style="left:0;top:57px;width:42px;height:27px;background:#e6e6e6;text-align:center;line-height:30px;">182</div>
<div class="a" style="left:0;top:84px;width:42px;height:1px;background:#bcbcbc;"></div>
<div class="a" style="left:43px;top:57px;width:1846px;height:27px;background:#ddebf7;"></div>
<div class="a" style="left:43px;top:84px;width:1846px;height:1px;background:#9dc3e6;"></div>
<div class="a t" style="left:43px;top:57px;width:103px;height:27px;overflow:hidden;box-sizing:border-box;line-height:30px;padding:0 0 0 3px;letter-spacing:0.500px;">OCHA</div>
<div class="a t" style="left:147px;top:57px;width:128px;height:27px;overflow:hidden;box-sizing:border-box;line-height:30px;text-align:right;padding:0 3.25px 0 0;letter-spacing:0.150px;">9/30/2022</div>
<div class="a t" style="left:276px;top:57px;width:172px;height:27px;overflow:hidden;box-sizing:border-box;line-height:30px;padding:0 0 0 3px;letter-spacing:0.000px;">Al Hudaydah</div>
<div class="a t" style="left:449px;top:57px;width:374px;height:27px;overflow:hidden;box-sizing:border-box;line-height:30px;padding:0 0 0 3px;letter-spacing:0.333px;">Hays</div>
<div class="a t" style="left:824px;top:57px;width:182px;height:27px;overflow:hidden;box-sizing:border-box;line-height:30px;padding:0 0 0 3px;letter-spacing:0.050px;">YE18</div>
<div class="a t" style="left:1007px;top:57px;width:182px;height:27px;overflow:hidden;box-sizing:border-box;line-height:30px;padding:0 0 0 3px;letter-spacing:0.050px;">YE1819</div>
<div class="a t" style="left:1190px;top:57px;width:251px;height:27px;overflow:hidden;box-sizing:border-box;line-height:30px;padding:0 0 0 3px;letter-spacing:-0.186px;">Shelling</div>
<div class="a t" style="left:1442px;top:57px;width:447px;height:27px;overflow:hidden;box-sizing:border-box;line-height:30px;padding:0 0 0 3px;letter-spacing:-0.186px;">Shelling</div>
<div class="a" style="left:0;top:85px;width:42px;height:27px;background:#e6e6e6;text-align:center;line-height:30px;">183</div>
<div class="a" style="left:0;top:112px;width:42px;height:1px;background:#bcbcbc;"></div>
<div class="a" style="left:43px;top:85px;width:1846px;height:27px;background:#fff;"></div>
<div class="a" style="left:43px;top:112px;width:1846px;height:1px;background:#9dc3e6;"></div>
<div class="a t" style="left:43px;top:85px;width:103px;height:27px;overflow:hidden;box-sizing:border-box;line-height:30px;padding:0 0 0 3px;letter-spacing:0.500px;">OCHA</div>
<div class="a t" style="left:147px;top:85px;width:128px;height:27px;overflow:hidden;box-sizing:border-box;line-height:30px;text-align:right;padding:0 3.25px 0 0;letter-spacing:0.150px;">9/30/2022</div>
<div class="a t" style="left:276px;top:85px;width:172px;height:27px;overflow:hidden;box-sizing:border-box;line-height:30px;padding:0 0 0 3px;letter-spacing:-0.133px;">Al Dhale&#x27;e</div>
<div class="a t" style="left:449px;top:85px;width:374px;height:27px;overflow:hidden;box-sizing:border-box;line-height:30px;padding:0 0 0 3px;letter-spacing:0.062px;">Qa&#x27;atabah</div>
<div class="a t" style="left:824px;top:85px;width:182px;height:27px;overflow:hidden;box-sizing:border-box;line-height:30px;padding:0 0 0 3px;letter-spacing:0.050px;">YE30</div>
<div class="a t" style="left:1007px;top:85px;width:182px;height:27px;overflow:hidden;box-sizing:border-box;line-height:30px;padding:0 0 0 3px;letter-spacing:0.050px;">YE3003</div>
<div class="a t" style="left:1190px;top:85px;width:251px;height:27px;overflow:hidden;box-sizing:border-box;line-height:30px;padding:0 0 0 3px;letter-spacing:-0.186px;">Shelling</div>
<div class="a t" style="left:1442px;top:85px;width:447px;height:27px;overflow:hidden;box-sizing:border-box;line-height:30px;padding:0 0 0 3px;letter-spacing:-0.186px;">Shelling</div>
<div class="a" style="left:0;top:113px;width:42px;height:27px;background:#e6e6e6;text-align:center;line-height:30px;">184</div>
<div class="a" style="left:0;top:140px;width:42px;height:1px;background:#bcbcbc;"></div>
<div class="a" style="left:43px;top:113px;width:1846px;height:27px;background:#ddebf7;"></div>
<div class="a" style="left:43px;top:140px;width:1846px;height:1px;background:#9dc3e6;"></div>
<div class="a t" style="left:43px;top:113px;width:103px;height:27px;overflow:hidden;box-sizing:border-box;line-height:30px;padding:0 0 0 3px;letter-spacing:0.500px;">OCHA</div>
<div class="a t" style="left:147px;top:113px;width:128px;height:27px;overflow:hidden;box-sizing:border-box;line-height:30px;text-align:right;padding:0 3.25px 0 0;letter-spacing:0.150px;">9/30/2022</div>
<div class="a t" style="left:276px;top:113px;width:172px;height:27px;overflow:hidden;box-sizing:border-box;line-height:30px;padding:0 0 0 3.8px;letter-spacing:0.900px;">Taizz</div>
<div class="a t" style="left:449px;top:113px;width:374px;height:27px;overflow:hidden;box-sizing:border-box;line-height:30px;padding:0 0 0 3px;letter-spacing:0.300px;">Sabir Al Mawadim</div>
<div class="a t" style="left:824px;top:113px;width:182px;height:27px;overflow:hidden;box-sizing:border-box;line-height:30px;padding:0 0 0 3px;letter-spacing:0.050px;">YE15</div>
<div class="a t" style="left:1007px;top:113px;width:182px;height:27px;overflow:hidden;box-sizing:border-box;line-height:30px;padding:0 0 0 3px;letter-spacing:0.050px;">YE1510</div>
<div class="a t" style="left:1190px;top:113px;width:251px;height:27px;overflow:hidden;box-sizing:border-box;line-height:30px;padding:0 0 0 3px;letter-spacing:-0.186px;">Shelling</div>
<div class="a t" style="left:1442px;top:113px;width:447px;height:27px;overflow:hidden;box-sizing:border-box;line-height:30px;padding:0 0 0 3px;letter-spacing:-0.186px;">Shelling</div>
<div class="a" style="left:0;top:141px;width:42px;height:27px;background:#e6e6e6;text-align:center;line-height:30px;">185</div>
<div class="a" style="left:0;top:168px;width:42px;height:1px;background:#bcbcbc;"></div>
<div class="a" style="left:43px;top:141px;width:1846px;height:27px;background:#fff;"></div>
<div class="a" style="left:43px;top:168px;width:1846px;height:1px;background:#9dc3e6;"></div>
<div class="a t" style="left:43px;top:141px;width:103px;height:27px;overflow:hidden;box-sizing:border-box;line-height:30px;padding:0 0 0 3px;letter-spacing:0.500px;">OCHA</div>
<div class="a t" style="left:147px;top:141px;width:128px;height:27px;overflow:hidden;box-sizing:border-box;line-height:30px;text-align:right;padding:0 3.25px 0 0;letter-spacing:0.150px;">9/30/2022</div>
<div class="a t" style="left:276px;top:141px;width:172px;height:27px;overflow:hidden;box-sizing:border-box;line-height:30px;padding:0 0 0 3.8px;letter-spacing:0.900px;">Taizz</div>
<div class="a t" style="left:449px;top:141px;width:374px;height:27px;overflow:hidden;box-sizing:border-box;line-height:30px;padding:0 0 0 3px;letter-spacing:-0.067px;">Salh</div>
<div class="a t" style="left:824px;top:141px;width:182px;height:27px;overflow:hidden;box-sizing:border-box;line-height:30px;padding:0 0 0 3px;letter-spacing:0.050px;">YE15</div>
<div class="a t" style="left:1007px;top:141px;width:182px;height:27px;overflow:hidden;box-sizing:border-box;line-height:30px;padding:0 0 0 3px;letter-spacing:0.050px;">YE1519</div>
<div class="a t" style="left:1190px;top:141px;width:251px;height:27px;overflow:hidden;box-sizing:border-box;line-height:30px;padding:0 0 0 3px;letter-spacing:-0.186px;">Shelling</div>
<div class="a t" style="left:1442px;top:141px;width:447px;height:27px;overflow:hidden;box-sizing:border-box;line-height:30px;padding:0 0 0 3px;letter-spacing:-0.186px;">Shelling</div>
<div class="a" style="left:0;top:169px;width:42px;height:27px;background:#e6e6e6;text-align:center;line-height:30px;">186</div>
<div class="a" style="left:0;top:196px;width:42px;height:1px;background:#bcbcbc;"></div>
<div class="a" style="left:43px;top:169px;width:1846px;height:27px;background:#ddebf7;"></div>
<div class="a" style="left:43px;top:196px;width:1846px;height:1px;background:#9dc3e6;"></div>
<div class="a t" style="left:43px;top:169px;width:103px;height:27px;overflow:hidden;box-sizing:border-box;line-height:30px;padding:0 0 0 3px;letter-spacing:0.500px;">OCHA</div>
<div class="a t" style="left:147px;top:169px;width:128px;height:27px;overflow:hidden;box-sizing:border-box;line-height:30px;text-align:right;padding:0 3.52px 0 0;letter-spacing:-0.122px;">10/26/2022</div>
<div class="a t" style="left:276px;top:169px;width:172px;height:27px;overflow:hidden;box-sizing:border-box;line-height:30px;padding:0 0 0 3.8px;letter-spacing:0.900px;">Taizz</div>
<div class="a t" style="left:449px;top:169px;width:374px;height:27px;overflow:hidden;box-sizing:border-box;line-height:30px;padding:0 0 0 3px;letter-spacing:0.000px;">Mawza</div>
<div class="a t" style="left:824px;top:169px;width:182px;height:27px;overflow:hidden;box-sizing:border-box;line-height:30px;padding:0 0 0 3px;letter-spacing:0.050px;">YE15</div>
<div class="a t" style="left:1007px;top:169px;width:182px;height:27px;overflow:hidden;box-sizing:border-box;line-height:30px;padding:0 0 0 3px;letter-spacing:0.050px;">YE1507</div>
<div class="a t" style="left:1190px;top:169px;width:251px;height:27px;overflow:hidden;box-sizing:border-box;line-height:30px;padding:0 0 0 3px;letter-spacing:-0.047px;">Kidnapping or Hijacking of Humanitarian Workers</div>
<div class="a t" style="left:1442px;top:169px;width:447px;height:27px;overflow:hidden;box-sizing:border-box;line-height:30px;padding:0 0 0 3px;letter-spacing:-0.047px;">Kidnapping or Hijacking of Humanitarian Workers</div>
<div class="a" style="left:0;top:197px;width:42px;height:27px;background:#e6e6e6;text-align:center;line-height:30px;">187</div>
<div class="a" style="left:0;top:224px;width:42px;height:1px;background:#bcbcbc;"></div>
<div class="a" style="left:43px;top:197px;width:1846px;height:27px;background:#fff;"></div>
<div class="a" style="left:43px;top:224px;width:1846px;height:1px;background:#9dc3e6;"></div>
<div class="a t" style="left:43px;top:197px;width:103px;height:27px;overflow:hidden;box-sizing:border-box;line-height:30px;padding:0 0 0 3px;letter-spacing:0.500px;">OCHA</div>
<div class="a t" style="left:147px;top:197px;width:128px;height:27px;overflow:hidden;box-sizing:border-box;line-height:30px;text-align:right;padding:0 3.52px 0 0;letter-spacing:-0.122px;">10/25/2022</div>
<div class="a t" style="left:276px;top:197px;width:172px;height:27px;overflow:hidden;box-sizing:border-box;line-height:30px;padding:0 0 0 3.8px;letter-spacing:0.900px;">Taizz</div>
<div class="a t" style="left:449px;top:197px;width:374px;height:27px;overflow:hidden;box-sizing:border-box;line-height:30px;padding:0 0 0 3px;letter-spacing:-0.080px;">Dhubab</div>
<div class="a t" style="left:824px;top:197px;width:182px;height:27px;overflow:hidden;box-sizing:border-box;line-height:30px;padding:0 0 0 3px;letter-spacing:0.050px;">YE15</div>
<div class="a t" style="left:1007px;top:197px;width:182px;height:27px;overflow:hidden;box-sizing:border-box;line-height:30px;padding:0 0 0 3px;letter-spacing:0.050px;">YE1506</div>
<div class="a t" style="left:1190px;top:197px;width:251px;height:27px;overflow:hidden;box-sizing:border-box;line-height:30px;padding:0 0 0 3px;letter-spacing:-0.047px;">Kidnapping or Hijacking of Humanitarian Workers</div>
<div class="a t" style="left:1442px;top:197px;width:447px;height:27px;overflow:hidden;box-sizing:border-box;line-height:30px;padding:0 0 0 3px;letter-spacing:-0.047px;">Kidnapping or Hijacking of Humanitarian Workers</div>
<div class="a" style="left:0;top:225px;width:42px;height:27px;background:#e6e6e6;text-align:center;line-height:30px;">188</div>
<div class="a" style="left:0;top:252px;width:42px;height:1px;background:#bcbcbc;"></div>
<div class="a" style="left:43px;top:225px;width:1846px;height:27px;background:#ddebf7;"></div>
<div class="a" style="left:43px;top:252px;width:1846px;height:1px;background:#9dc3e6;"></div>
<div class="a t" style="left:43px;top:225px;width:103px;height:27px;overflow:hidden;box-sizing:border-box;line-height:30px;padding:0 0 0 3px;letter-spacing:0.500px;">OCHA</div>
<div class="a t" style="left:147px;top:225px;width:128px;height:27px;overflow:hidden;box-sizing:border-box;line-height:30px;text-align:right;padding:0 3.52px 0 0;letter-spacing:-0.122px;">12/24/2022</div>
<div class="a t" style="left:276px;top:225px;width:172px;height:27px;overflow:hidden;box-sizing:border-box;line-height:30px;padding:0 0 0 3px;letter-spacing:0.275px;">Marib</div>
<div class="a t" style="left:449px;top:225px;width:374px;height:27px;overflow:hidden;box-sizing:border-box;line-height:30px;padding:0 0 0 3px;letter-spacing:0.267px;">Marib City</div>
<div class="a t" style="left:824px;top:225px;width:182px;height:27px;overflow:hidden;box-sizing:border-box;line-height:30px;padding:0 0 0 3px;letter-spacing:0.050px;">YE26</div>
<div class="a t" style="left:1007px;top:225px;width:182px;height:27px;overflow:hidden;box-sizing:border-box;line-height:30px;padding:0 0 0 3px;letter-spacing:0.050px;">YE2612</div>
<div class="a t" style="left:1190px;top:225px;width:251px;height:27px;overflow:hidden;box-sizing:border-box;line-height:30px;padding:0 0 0 3px;letter-spacing:0.250px;">Movement Restriction</div>
<div class="a t" style="left:1442px;top:225px;width:447px;height:27px;overflow:hidden;box-sizing:border-box;line-height:30px;padding:0 0 0 3px;letter-spacing:0.000px;">Delay or Intervention with Humanitarian visits or Activities</div>
<div class="a" style="left:0;top:253px;width:42px;height:27px;background:#e6e6e6;text-align:center;line-height:30px;">189</div>
<div class="a" style="left:0;top:280px;width:42px;height:1px;background:#bcbcbc;"></div>
<div class="a" style="left:43px;top:253px;width:1846px;height:27px;background:#fff;"></div>
<div class="a" style="left:43px;top:280px;width:1846px;height:1px;background:#9dc3e6;"></div>
<div class="a t" style="left:43px;top:253px;width:103px;height:27px;overflow:hidden;box-sizing:border-box;line-height:30px;padding:0 0 0 3px;letter-spacing:0.500px;">OCHA</div>
<div class="a t" style="left:147px;top:253px;width:128px;height:27px;overflow:hidden;box-sizing:border-box;line-height:30px;text-align:right;padding:0 3.54px 0 0;letter-spacing:-0.137px;">10/9/2022</div>
<div class="a t" style="left:276px;top:253px;width:172px;height:27px;overflow:hidden;box-sizing:border-box;line-height:30px;padding:0 0 0 3.8px;letter-spacing:0.900px;">Taizz</div>
<div class="a t" style="left:449px;top:253px;width:374px;height:27px;overflow:hidden;box-sizing:border-box;line-height:30px;padding:0 0 0 3px;letter-spacing:-0.058px;">Jabal Habashy</div>
<div class="a t" style="left:824px;top:253px;width:182px;height:27px;overflow:hidden;box-sizing:border-box;line-height:30px;padding:0 0 0 3px;letter-spacing:0.050px;">YE15</div>
<div class="a t" style="left:1007px;top:253px;width:182px;height:27px;overflow:hidden;box-sizing:border-box;line-height:30px;padding:0 0 0 3px;letter-spacing:0.050px;">YE1508</div>
<div class="a t" style="left:1190px;top:253px;width:251px;height:27px;overflow:hidden;box-sizing:border-box;line-height:30px;padding:0 0 0 3px;letter-spacing:0.125px;">Looting of Humanitarian Goods</div>
<div class="a t" style="left:1442px;top:253px;width:447px;height:27px;overflow:hidden;box-sizing:border-box;line-height:30px;padding:0 0 0 3px;letter-spacing:0.167px;">Damage to Humanitarian Goods or Premises</div>
<div class="a" style="left:0;top:281px;width:42px;height:27px;background:#e6e6e6;text-align:center;line-height:30px;">190</div>
<div class="a" style="left:0;top:308px;width:42px;height:1px;background:#bcbcbc;"></div>
<div class="a" style="left:43px;top:281px;width:1846px;height:27px;background:#ddebf7;"></div>
<div class="a" style="left:43px;top:308px;width:1846px;height:1px;background:#9dc3e6;"></div>
<div class="a t" style="left:43px;top:281px;width:103px;height:27px;overflow:hidden;box-sizing:border-box;line-height:30px;padding:0 0 0 3px;letter-spacing:0.500px;">OCHA</div>
<div class="a t" style="left:147px;top:281px;width:128px;height:27px;overflow:hidden;box-sizing:border-box;line-height:30px;text-align:right;padding:0 3.52px 0 0;letter-spacing:-0.122px;">10/20/2022</div>
<div class="a t" style="left:276px;top:281px;width:172px;height:27px;overflow:hidden;box-sizing:border-box;line-height:30px;padding:0 0 0 3px;letter-spacing:-0.167px;">Shabwah</div>
<div class="a t" style="left:449px;top:281px;width:374px;height:27px;overflow:hidden;box-sizing:border-box;line-height:30px;padding:0 0 0 3px;letter-spacing:0.300px;">Hatib</div>
<div class="a t" style="left:824px;top:281px;width:182px;height:27px;overflow:hidden;box-sizing:border-box;line-height:30px;padding:0 0 0 3px;letter-spacing:0.050px;">YE21</div>
<div class="a t" style="left:1007px;top:281px;width:182px;height:27px;overflow:hidden;box-sizing:border-box;line-height:30px;padding:0 0 0 3px;letter-spacing:0.050px;">YE2111</div>
<div class="a t" style="left:1190px;top:281px;width:251px;height:27px;overflow:hidden;box-sizing:border-box;line-height:30px;padding:0 0 0 3.8px;letter-spacing:0.021px;">Threats Against Humanitarian Workers</div>
<div class="a t" style="left:1442px;top:281px;width:447px;height:27px;overflow:hidden;box-sizing:border-box;line-height:30px;padding:0 0 0 3.8px;letter-spacing:0.021px;">Threats Against Humanitarian Workers</div>
<div class="a" style="left:0;top:309px;width:42px;height:27px;background:#e6e6e6;text-align:center;line-height:30px;">191</div>
<div class="a" style="left:0;top:336px;width:42px;height:1px;background:#bcbcbc;"></div>
<div class="a" style="left:43px;top:309px;width:1846px;height:27px;background:#fff;"></div>
<div class="a" style="left:43px;top:336px;width:1846px;height:1px;background:#9dc3e6;"></div>
<div class="a t" style="left:43px;top:309px;width:103px;height:27px;overflow:hidden;box-sizing:border-box;line-height:30px;padding:0 0 0 3px;letter-spacing:0.500px;">OCHA</div>
<div class="a t" style="left:147px;top:309px;width:128px;height:27px;overflow:hidden;box-sizing:border-box;line-height:30px;text-align:right;padding:0 3.54px 0 0;letter-spacing:-0.137px;">12/4/2022</div>
<div class="a t" style="left:276px;top:309px;width:172px;height:27px;overflow:hidden;box-sizing:border-box;line-height:30px;padding:0 0 0 3px;letter-spacing:0.100px;">Aden</div>
<div class="a t" style="left:449px;top:309px;width:374px;height:27px;overflow:hidden;box-sizing:border-box;line-height:30px;padding:0 0 0 3px;letter-spacing:0.050px;">Al Buraiqeh</div>
<div class="a t" style="left:824px;top:309px;width:182px;height:27px;overflow:hidden;box-sizing:border-box;line-height:30px;padding:0 0 0 3px;letter-spacing:0.050px;">YE24</div>
<div class="a t" style="left:1007px;top:309px;width:182px;height:27px;overflow:hidden;box-sizing:border-box;line-height:30px;padding:0 0 0 3px;letter-spacing:0.050px;">YE2404</div>
<div class="a t" style="left:1190px;top:309px;width:251px;height:27px;overflow:hidden;box-sizing:border-box;line-height:30px;padding:0 0 0 3px;letter-spacing:0.272px;">Suspension of Activities</div>
<div class="a t" style="left:1442px;top:309px;width:447px;height:27px;overflow:hidden;box-sizing:border-box;line-height:30px;padding:0 0 0 3px;letter-spacing:0.000px;">Delay or Intervention with Humanitarian visits or Activities</div>
<div class="a" style="left:0;top:337px;width:42px;height:27px;background:#e6e6e6;text-align:center;line-height:30px;">192</div>
<div class="a" style="left:0;top:364px;width:42px;height:1px;background:#bcbcbc;"></div>
<div class="a" style="left:43px;top:337px;width:1846px;height:27px;background:#ddebf7;"></div>
<div class="a" style="left:43px;top:364px;width:1846px;height:1px;background:#9dc3e6;"></div>
<div class="a t" style="left:43px;top:337px;width:103px;height:27px;overflow:hidden;box-sizing:border-box;line-height:30px;padding:0 0 0 3px;letter-spacing:0.500px;">OCHA</div>
<div class="a t" style="left:147px;top:337px;width:128px;height:27px;overflow:hidden;box-sizing:border-box;line-height:30px;text-align:right;padding:0 3.54px 0 0;letter-spacing:-0.137px;">1/17/2023</div>
<div class="a t" style="left:276px;top:337px;width:172px;height:27px;overflow:hidden;box-sizing:border-box;line-height:30px;padding:0 0 0 3.8px;letter-spacing:0.900px;">Taizz</div>
<div class="a t" style="left:449px;top:337px;width:374px;height:27px;overflow:hidden;box-sizing:border-box;line-height:30px;padding:0 0 0 3px;letter-spacing:0.200px;">Al Wazi&#x27;iyah</div>
<div class="a t" style="left:824px;top:337px;width:182px;height:27px;overflow:hidden;box-sizing:border-box;line-height:30px;padding:0 0 0 3px;letter-spacing:0.050px;">YE15</div>
<div class="a t" style="left:1007px;top:337px;width:182px;height:27px;overflow:hidden;box-sizing:border-box;line-height:30px;padding:0 0 0 3px;letter-spacing:0.050px;">YE1515</div>
<div class="a t" style="left:1190px;top:337px;width:251px;height:27px;overflow:hidden;box-sizing:border-box;line-height:30px;padding:0 0 0 3px;letter-spacing:0.272px;">Suspension of Activities</div>
<div class="a t" style="left:1442px;top:337px;width:447px;height:27px;overflow:hidden;box-sizing:border-box;line-height:30px;padding:0 0 0 3px;letter-spacing:0.000px;">Delay or Intervention with Humanitarian visits or Activities</div>
<div class="a" style="left:0;top:365px;width:42px;height:27px;background:#e6e6e6;text-align:center;line-height:30px;">193</div>
<div class="a" style="left:0;top:392px;width:42px;height:1px;background:#bcbcbc;"></div>
<div class="a" style="left:43px;top:365px;width:1846px;height:27px;background:#fff;"></div>
<div class="a" style="left:43px;top:392px;width:1846px;height:1px;background:#9dc3e6;"></div>
<div class="a t" style="left:43px;top:365px;width:103px;height:27px;overflow:hidden;box-sizing:border-box;line-height:30px;padding:0 0 0 3px;letter-spacing:0.500px;">OCHA</div>
<div class="a t" style="left:147px;top:365px;width:128px;height:27px;overflow:hidden;box-sizing:border-box;line-height:30px;text-align:right;padding:0 3.54px 0 0;letter-spacing:-0.137px;">1/22/2023</div>
<div class="a t" style="left:276px;top:365px;width:172px;height:27px;overflow:hidden;box-sizing:border-box;line-height:30px;padding:0 0 0 3px;letter-spacing:0.100px;">Aden</div>
<div class="a t" style="left:449px;top:365px;width:374px;height:27px;overflow:hidden;box-sizing:border-box;line-height:30px;padding:0 0 0 3px;letter-spacing:0.050px;">Al Buraiqeh</div>
<div class="a t" style="left:824px;top:365px;width:182px;height:27px;overflow:hidden;box-sizing:border-box;line-height:30px;padding:0 0 0 3px;letter-spacing:0.050px;">YE24</div>
<div class="a t" style="left:1007px;top:365px;width:182px;height:27px;overflow:hidden;box-sizing:border-box;line-height:30px;padding:0 0 0 3px;letter-spacing:0.050px;">YE2404</div>
<div class="a t" style="left:1190px;top:365px;width:251px;height:27px;overflow:hidden;box-sizing:border-box;line-height:30px;padding:0 0 0 3px;letter-spacing:0.250px;">Movement Restriction</div>
<div class="a t" style="left:1442px;top:365px;width:447px;height:27px;overflow:hidden;box-sizing:border-box;line-height:30px;padding:0 0 0 3px;letter-spacing:0.000px;">Delay or Intervention with Humanitarian visits or Activities</div>
<div class="a" style="left:0;top:393px;width:42px;height:27px;background:#e6e6e6;text-align:center;line-height:30px;">194</div>
<div class="a" style="left:0;top:420px;width:42px;height:1px;background:#bcbcbc;"></div>
<div class="a" style="left:43px;top:393px;width:1846px;height:27px;background:#ddebf7;"></div>
<div class="a" style="left:43px;top:420px;width:1846px;height:1px;background:#9dc3e6;"></div>
<div class="a t" style="left:43px;top:393px;width:103px;height:27px;overflow:hidden;box-sizing:border-box;line-height:30px;padding:0 0 0 3px;letter-spacing:0.500px;">OCHA</div>
<div class="a t" style="left:147px;top:393px;width:128px;height:27px;overflow:hidden;box-sizing:border-box;line-height:30px;text-align:right;padding:0 3.54px 0 0;letter-spacing:-0.137px;">1/25/2023</div>
<div class="a t" style="left:276px;top:393px;width:172px;height:27px;overflow:hidden;box-sizing:border-box;line-height:30px;padding:0 0 0 3.8px;letter-spacing:0.900px;">Taizz</div>
<div class="a t" style="left:449px;top:393px;width:374px;height:27px;overflow:hidden;box-sizing:border-box;line-height:30px;padding:0 0 0 3px;letter-spacing:0.200px;">Al Wazi&#x27;iyah</div>
<div class="a t" style="left:824px;top:393px;width:182px;height:27px;overflow:hidden;box-sizing:border-box;line-height:30px;padding:0 0 0 3px;letter-spacing:0.050px;">YE15</div>
<div class="a t" style="left:1007px;top:393px;width:182px;height:27px;overflow:hidden;box-sizing:border-box;line-height:30px;padding:0 0 0 3px;letter-spacing:0.050px;">YE1515</div>
<div class="a t" style="left:1190px;top:393px;width:251px;height:27px;overflow:hidden;box-sizing:border-box;line-height:30px;padding:0 0 0 3px;letter-spacing:0.272px;">Suspension of Activities</div>
<div class="a t" style="left:1442px;top:393px;width:447px;height:27px;overflow:hidden;box-sizing:border-box;line-height:30px;padding:0 0 0 3px;letter-spacing:0.000px;">Delay or Intervention with Humanitarian visits or Activities</div>
<div class="a" style="left:0;top:421px;width:42px;height:27px;background:#e6e6e6;text-align:center;line-height:30px;">195</div>
<div class="a" style="left:0;top:448px;width:42px;height:1px;background:#bcbcbc;"></div>
<div class="a" style="left:43px;top:421px;width:1846px;height:27px;background:#fff;"></div>
<div class="a" style="left:43px;top:448px;width:1846px;height:1px;background:#9dc3e6;"></div>
<div class="a t" style="left:43px;top:421px;width:103px;height:27px;overflow:hidden;box-sizing:border-box;line-height:30px;padding:0 0 0 3px;letter-spacing:0.500px;">OCHA</div>
<div class="a t" style="left:147px;top:421px;width:128px;height:27px;overflow:hidden;box-sizing:border-box;line-height:30px;text-align:right;padding:0 3.44px 0 0;letter-spacing:-0.043px;">3/5/2023</div>
<div class="a t" style="left:276px;top:421px;width:172px;height:27px;overflow:hidden;box-sizing:border-box;line-height:30px;padding:0 0 0 3.8px;letter-spacing:0.900px;">Taizz</div>
<div class="a t" style="left:449px;top:421px;width:374px;height:27px;overflow:hidden;box-sizing:border-box;line-height:30px;padding:0 0 0 3px;letter-spacing:-0.286px;">Al Mukha</div>
<div class="a t" style="left:824px;top:421px;width:182px;height:27px;overflow:hidden;box-sizing:border-box;line-height:30px;padding:0 0 0 3px;letter-spacing:0.050px;">YE15</div>
<div class="a t" style="left:1007px;top:421px;width:182px;height:27px;overflow:hidden;box-sizing:border-box;line-height:30px;padding:0 0 0 3px;letter-spacing:0.050px;">YE1505</div>
<div class="a t" style="left:1190px;top:421px;width:251px;height:27px;overflow:hidden;box-sizing:border-box;line-height:30px;padding:0 0 0 3px;letter-spacing:0.250px;">Movement Restriction</div>
<div class="a t" style="left:1442px;top:421px;width:447px;height:27px;overflow:hidden;box-sizing:border-box;line-height:30px;padding:0 0 0 3px;letter-spacing:0.000px;">Delay or Intervention with Humanitarian visits or Activities</div>
<div class="a" style="left:0;top:449px;width:42px;height:27px;background:#e6e6e6;text-align:center;line-height:30px;">196</div>
<div class="a" style="left:0;top:476px;width:42px;height:1px;background:#bcbcbc;"></div>
<div class="a" style="left:43px;top:449px;width:1846px;height:27px;background:#ddebf7;"></div>
<div class="a" style="left:43px;top:476px;width:1846px;height:1px;background:#9dc3e6;"></div>
<div class="a t" style="left:43px;top:449px;width:103px;height:27px;overflow:hidden;box-sizing:border-box;line-height:30px;padding:0 0 0 3px;letter-spacing:0.500px;">OCHA</div>
<div class="a t" style="left:147px;top:449px;width:128px;height:27px;overflow:hidden;box-sizing:border-box;line-height:30px;text-align:right;padding:0 3.44px 0 0;letter-spacing:-0.043px;">3/9/2023</div>
<div class="a t" style="left:276px;top:449px;width:172px;height:27px;overflow:hidden;box-sizing:border-box;line-height:30px;padding:0 0 0 3px;letter-spacing:-0.133px;">Al Dhale&#x27;e</div>
<div class="a t" style="left:449px;top:449px;width:374px;height:27px;overflow:hidden;box-sizing:border-box;line-height:30px;padding:0 0 0 3px;letter-spacing:-0.080px;">Ash Shu&#x27;ayb</div>
<div class="a t" style="left:824px;top:449px;width:182px;height:27px;overflow:hidden;box-sizing:border-box;line-height:30px;padding:0 0 0 3px;letter-spacing:0.050px;">YE30</div>
<div class="a t" style="left:1007px;top:449px;width:182px;height:27px;overflow:hidden;box-sizing:border-box;line-height:30px;padding:0 0 0 3px;letter-spacing:0.050px;">YE3004</div>
<div class="a t" style="left:1190px;top:449px;width:251px;height:27px;overflow:hidden;box-sizing:border-box;line-height:30px;padding:0 0 0 3px;letter-spacing:0.167px;">Damage to Humanitarian Goods or Premises</div>
<div class="a t" style="left:1442px;top:449px;width:447px;height:27px;overflow:hidden;box-sizing:border-box;line-height:30px;padding:0 0 0 3px;letter-spacing:0.167px;">Damage to Humanitarian Goods or Premises</div>
<div class="a" style="left:0;top:477px;width:42px;height:27px;background:#e6e6e6;text-align:center;line-height:30px;">197</div>
<div class="a" style="left:0;top:504px;width:42px;height:1px;background:#bcbcbc;"></div>
<div class="a" style="left:43px;top:477px;width:1846px;height:27px;background:#fff;"></div>
<div class="a" style="left:43px;top:504px;width:1846px;height:1px;background:#9dc3e6;"></div>
<div class="a t" style="left:43px;top:477px;width:103px;height:27px;overflow:hidden;box-sizing:border-box;line-height:30px;padding:0 0 0 3px;letter-spacing:0.500px;">OCHA</div>
<div class="a t" style="left:147px;top:477px;width:128px;height:27px;overflow:hidden;box-sizing:border-box;line-height:30px;text-align:right;padding:0 3.46px 0 0;letter-spacing:-0.057px;">4/2/2023</div>
<div class="a t" style="left:276px;top:477px;width:172px;height:27px;overflow:hidden;box-sizing:border-box;line-height:30px;padding:0 0 0 3px;letter-spacing:0.200px;">Abyan</div>
<div class="a t" style="left:449px;top:477px;width:374px;height:27px;overflow:hidden;box-sizing:border-box;line-height:30px;padding:0 0 0 3px;letter-spacing:-0.133px;">Khanfir</div>
<div class="a t" style="left:824px;top:477px;width:182px;height:27px;overflow:hidden;box-sizing:border-box;line-height:30px;padding:0 0 0 3px;letter-spacing:0.050px;">YE12</div>
<div class="a t" style="left:1007px;top:477px;width:182px;height:27px;overflow:hidden;box-sizing:border-box;line-height:30px;padding:0 0 0 3px;letter-spacing:0.050px;">YE1211</div>
<div class="a t" style="left:1190px;top:477px;width:251px;height:27px;overflow:hidden;box-sizing:border-box;line-height:30px;padding:0 0 0 3px;letter-spacing:0.308px;">Presence of Mines or UXOs</div>
<div class="a t" style="left:1442px;top:477px;width:447px;height:27px;overflow:hidden;box-sizing:border-box;line-height:30px;padding:0 0 0 3px;letter-spacing:0.308px;">Presence of Mines or UXOs</div>
<div class="a" style="left:0;top:505px;width:42px;height:27px;background:#e6e6e6;text-align:center;line-height:30px;">198</div>
<div class="a" style="left:0;top:532px;width:42px;height:1px;background:#bcbcbc;"></div>
<div class="a" style="left:43px;top:505px;width:1846px;height:27px;background:#ddebf7;"></div>
<div class="a" style="left:43px;top:532px;width:1846px;height:1px;background:#9dc3e6;"></div>
<div class="a t" style="left:43px;top:505px;width:103px;height:27px;overflow:hidden;box-sizing:border-box;line-height:30px;padding:0 0 0 3px;letter-spacing:0.500px;">OCHA</div>
<div class="a t" style="left:147px;top:505px;width:128px;height:27px;overflow:hidden;box-sizing:border-box;line-height:30px;text-align:right;padding:0 3.46px 0 0;letter-spacing:-0.057px;">4/3/2023</div>
<div class="a t" style="left:276px;top:505px;width:172px;height:27px;overflow:hidden;box-sizing:border-box;line-height:30px;padding:0 0 0 3.8px;letter-spacing:0.900px;">Taizz</div>
<div class="a t" style="left:449px;top:505px;width:374px;height:27px;overflow:hidden;box-sizing:border-box;line-height:30px;padding:0 0 0 3px;letter-spacing:-0.286px;">Al Mukha</div>
<div class="a t" style="left:824px;top:505px;width:182px;height:27px;overflow:hidden;box-sizing:border-box;line-height:30px;padding:0 0 0 3px;letter-spacing:0.050px;">YE15</div>
<div class="a t" style="left:1007px;top:505px;width:182px;height:27px;overflow:hidden;box-sizing:border-box;line-height:30px;padding:0 0 0 3px;letter-spacing:0.050px;">YE1505</div>
<div class="a t" style="left:1190px;top:505px;width:251px;height:27px;overflow:hidden;box-sizing:border-box;line-height:30px;padding:0 0 0 3px;letter-spacing:0.125px;">Looting of Humanitarian Goods</div>
<div class="a t" style="left:1442px;top:505px;width:447px;height:27px;overflow:hidden;box-sizing:border-box;line-height:30px;padding:0 0 0 3px;letter-spacing:0.167px;">Damage to Humanitarian Goods or Premises</div>
<div class="a" style="left:0;top:533px;width:42px;height:27px;background:#e6e6e6;text-align:center;line-height:30px;">199</div>
<div class="a" style="left:0;top:560px;width:42px;height:1px;background:#bcbcbc;"></div>
<div class="a" style="left:43px;top:533px;width:1846px;height:27px;background:#fff;"></div>
<div class="a" style="left:43px;top:560px;width:1846px;height:1px;background:#9dc3e6;"></div>
<div class="a t" style="left:43px;top:533px;width:103px;height:27px;overflow:hidden;box-sizing:border-box;line-height:30px;padding:0 0 0 3px;letter-spacing:0.500px;">OCHA</div>
<div class="a t" style="left:147px;top:533px;width:128px;height:27px;overflow:hidden;box-sizing:border-box;line-height:30px;text-align:right;padding:0 3.46px 0 0;letter-spacing:-0.057px;">4/3/2023</div>
<div class="a t" style="left:276px;top:533px;width:172px;height:27px;overflow:hidden;box-sizing:border-box;line-height:30px;padding:0 0 0 3.8px;letter-spacing:0.900px;">Taizz</div>
<div class="a t" style="left:449px;top:533px;width:374px;height:27px;overflow:hidden;box-sizing:border-box;line-height:30px;padding:0 0 0 3px;letter-spacing:0.145px;">Al Mudhaffar</div>
<div class="a t" style="left:824px;top:533px;width:182px;height:27px;overflow:hidden;box-sizing:border-box;line-height:30px;padding:0 0 0 3px;letter-spacing:0.050px;">YE15</div>
<div class="a t" style="left:1007px;top:533px;width:182px;height:27px;overflow:hidden;box-sizing:border-box;line-height:30px;padding:0 0 0 3px;letter-spacing:0.050px;">YE1517</div>
<div class="a t" style="left:1190px;top:533px;width:251px;height:27px;overflow:hidden;box-sizing:border-box;line-height:30px;padding:0 0 0 3px;letter-spacing:-0.186px;">Shelling</div>
<div class="a t" style="left:1442px;top:533px;width:447px;height:27px;overflow:hidden;box-sizing:border-box;line-height:30px;padding:0 0 0 3px;letter-spacing:-0.186px;">Shelling</div>
<div class="a" style="left:0;top:561px;width:42px;height:27px;background:#e6e6e6;text-align:center;line-height:30px;">200</div>
<div class="a" style="left:0;top:588px;width:42px;height:1px;background:#bcbcbc;"></div>
<div class="a" style="left:43px;top:561px;width:1846px;height:27px;background:#ddebf7;"></div>
<div class="a" style="left:43px;top:588px;width:1846px;height:1px;background:#9dc3e6;"></div>
<div class="a t" style="left:43px;top:561px;width:103px;height:27px;overflow:hidden;box-sizing:border-box;line-height:30px;padding:0 0 0 3px;letter-spacing:0.500px;">OCHA</div>
<div class="a t" style="left:147px;top:561px;width:128px;height:27px;overflow:hidden;box-sizing:border-box;line-height:30px;text-align:right;padding:0 3.37px 0 0;letter-spacing:0.025px;">4/10/2023</div>
<div class="a t" style="left:276px;top:561px;width:172px;height:27px;overflow:hidden;box-sizing:border-box;line-height:30px;padding:0 0 0 3px;letter-spacing:-0.133px;">Al Dhale&#x27;e</div>
<div class="a t" style="left:449px;top:561px;width:374px;height:27px;overflow:hidden;box-sizing:border-box;line-height:30px;padding:0 0 0 3px;letter-spacing:0.062px;">Qa&#x27;atabah</div>
<div class="a t" style="left:824px;top:561px;width:182px;height:27px;overflow:hidden;box-sizing:border-box;line-height:30px;padding:0 0 0 3px;letter-spacing:0.050px;">YE30</div>
<div class="a t" style="left:1007px;top:561px;width:182px;height:27px;overflow:hidden;box-sizing:border-box;line-height:30px;padding:0 0 0 3px;letter-spacing:0.050px;">YE3003</div>
<div class="a t" style="left:1190px;top:561px;width:251px;height:27px;overflow:hidden;box-sizing:border-box;line-height:30px;padding:0 0 0 3px;letter-spacing:-0.186px;">Shelling</div>
<div class="a t" style="left:1442px;top:561px;width:447px;height:27px;overflow:hidden;box-sizing:border-box;line-height:30px;padding:0 0 0 3px;letter-spacing:-0.186px;">Shelling</div>
<div class="a" style="left:0;top:589px;width:42px;height:27px;background:#e6e6e6;text-align:center;line-height:30px;">201</div>
<div class="a" style="left:0;top:616px;width:42px;height:1px;background:#bcbcbc;"></div>
<div class="a" style="left:43px;top:589px;width:1846px;height:27px;background:#fff;"></div>
<div class="a" style="left:43px;top:616px;width:1846px;height:1px;background:#9dc3e6;"></div>
<div class="a t" style="left:43px;top:589px;width:103px;height:27px;overflow:hidden;box-sizing:border-box;line-height:30px;padding:0 0 0 3px;letter-spacing:0.500px;">OCHA</div>
<div class="a t" style="left:147px;top:589px;width:128px;height:27px;overflow:hidden;box-sizing:border-box;line-height:30px;text-align:right;padding:0 3.37px 0 0;letter-spacing:0.025px;">4/16/2023</div>
<div class="a t" style="left:276px;top:589px;width:172px;height:27px;overflow:hidden;box-sizing:border-box;line-height:30px;padding:0 0 0 3.8px;letter-spacing:0.900px;">Taizz</div>
<div class="a t" style="left:449px;top:589px;width:374px;height:27px;overflow:hidden;box-sizing:border-box;line-height:30px;padding:0 0 0 3px;letter-spacing:-0.286px;">Al Mukha</div>
<div class="a t" style="left:824px;top:589px;width:182px;height:27px;overflow:hidden;box-sizing:border-box;line-height:30px;padding:0 0 0 3px;letter-spacing:0.050px;">YE15</div>
<div class="a t" style="left:1007px;top:589px;width:182px;height:27px;overflow:hidden;box-sizing:border-box;line-height:30px;padding:0 0 0 3px;letter-spacing:0.050px;">YE1505</div>
<div class="a t" style="left:1190px;top:589px;width:251px;height:27px;overflow:hidden;box-sizing:border-box;line-height:30px;padding:0 0 0 3px;letter-spacing:0.250px;">Movement Restriction</div>
<div class="a t" style="left:1442px;top:589px;width:447px;height:27px;overflow:hidden;box-sizing:border-box;line-height:30px;padding:0 0 0 3px;letter-spacing:0.000px;">Delay or Intervention with Humanitarian visits or Activities</div>
<div class="a" style="left:146px;top:29px;width:1px;height:27px;background:#d4d4d4;"></div>
<div class="a" style="left:275px;top:29px;width:1px;height:27px;background:#d4d4d4;"></div>
<div class="a" style="left:448px;top:29px;width:1px;height:27px;background:#d4d4d4;"></div>
<div class="a" style="left:823px;top:29px;width:1px;height:27px;background:#d4d4d4;"></div>
<div class="a" style="left:1006px;top:29px;width:1px;height:27px;background:#d4d4d4;"></div>
<div class="a" style="left:1189px;top:29px;width:1px;height:27px;background:#d4d4d4;"></div>
<div class="a" style="left:1441px;top:29px;width:1px;height:27px;background:#d4d4d4;"></div>
<div class="a" style="left:146px;top:85px;width:1px;height:27px;background:#d4d4d4;"></div>
<div class="a" style="left:275px;top:85px;width:1px;height:27px;background:#d4d4d4;"></div>
<div class="a" style="left:448px;top:85px;width:1px;height:27px;background:#d4d4d4;"></div>
<div class="a" style="left:823px;top:85px;width:1px;height:27px;background:#d4d4d4;"></div>
<div class="a" style="left:1006px;top:85px;width:1px;height:27px;background:#d4d4d4;"></div>
<div class="a" style="left:1189px;top:85px;width:1px;height:27px;background:#d4d4d4;"></div>
<div class="a" style="left:1441px;top:85px;width:1px;height:27px;background:#d4d4d4;"></div>
<div class="a" style="left:146px;top:141px;width:1px;height:27px;background:#d4d4d4;"></div>
<div class="a" style="left:275px;top:141px;width:1px;height:27px;background:#d4d4d4;"></div>
<div class="a" style="left:448px;top:141px;width:1px;height:27px;background:#d4d4d4;"></div>
<div class="a" style="left:823px;top:141px;width:1px;height:27px;background:#d4d4d4;"></div>
<div class="a" style="left:1006px;top:141px;width:1px;height:27px;background:#d4d4d4;"></div>
<div class="a" style="left:1189px;top:141px;width:1px;height:27px;background:#d4d4d4;"></div>
<div class="a" style="left:1441px;top:141px;width:1px;height:27px;background:#d4d4d4;"></div>
<div class="a" style="left:146px;top:197px;width:1px;height:27px;background:#d4d4d4;"></div>
<div class="a" style="left:275px;top:197px;width:1px;height:27px;background:#d4d4d4;"></div>
<div class="a" style="left:448px;top:197px;width:1px;height:27px;background:#d4d4d4;"></div>
<div class="a" style="left:823px;top:197px;width:1px;height:27px;background:#d4d4d4;"></div>
<div class="a" style="left:1006px;top:197px;width:1px;height:27px;background:#d4d4d4;"></div>
<div class="a" style="left:1189px;top:197px;width:1px;height:27px;background:#d4d4d4;"></div>
<div class="a" style="left:1441px;top:197px;width:1px;height:27px;background:#d4d4d4;"></div>
<div class="a" style="left:146px;top:253px;width:1px;height:27px;background:#d4d4d4;"></div>
<div class="a" style="left:275px;top:253px;width:1px;height:27px;background:#d4d4d4;"></div>
<div class="a" style="left:448px;top:253px;width:1px;height:27px;background:#d4d4d4;"></div>
<div class="a" style="left:823px;top:253px;width:1px;height:27px;background:#d4d4d4;"></div>
<div class="a" style="left:1006px;top:253px;width:1px;height:27px;background:#d4d4d4;"></div>
<div class="a" style="left:1189px;top:253px;width:1px;height:27px;background:#d4d4d4;"></div>
<div class="a" style="left:1441px;top:253px;width:1px;height:27px;background:#d4d4d4;"></div>
<div class="a" style="left:146px;top:309px;width:1px;height:27px;background:#d4d4d4;"></div>
<div class="a" style="left:275px;top:309px;width:1px;height:27px;background:#d4d4d4;"></div>
<div class="a" style="left:448px;top:309px;width:1px;height:27px;background:#d4d4d4;"></div>
<div class="a" style="left:823px;top:309px;width:1px;height:27px;background:#d4d4d4;"></div>
<div class="a" style="left:1006px;top:309px;width:1px;height:27px;background:#d4d4d4;"></div>
<div class="a" style="left:1189px;top:309px;width:1px;height:27px;background:#d4d4d4;"></div>
<div class="a" style="left:1441px;top:309px;width:1px;height:27px;background:#d4d4d4;"></div>
<div class="a" style="left:146px;top:365px;width:1px;height:27px;background:#d4d4d4;"></div>
<div class="a" style="left:275px;top:365px;width:1px;height:27px;background:#d4d4d4;"></div>
<div class="a" style="left:448px;top:365px;width:1px;height:27px;background:#d4d4d4;"></div>
<div class="a" style="left:823px;top:365px;width:1px;height:27px;background:#d4d4d4;"></div>
<div class="a" style="left:1006px;top:365px;width:1px;height:27px;background:#d4d4d4;"></div>
<div class="a" style="left:1189px;top:365px;width:1px;height:27px;background:#d4d4d4;"></div>
<div class="a" style="left:1441px;top:365px;width:1px;height:27px;background:#d4d4d4;"></div>
<div class="a" style="left:146px;top:421px;width:1px;height:27px;background:#d4d4d4;"></div>
<div class="a" style="left:275px;top:421px;width:1px;height:27px;background:#d4d4d4;"></div>
<div class="a" style="left:448px;top:421px;width:1px;height:27px;background:#d4d4d4;"></div>
<div class="a" style="left:823px;top:421px;width:1px;height:27px;background:#d4d4d4;"></div>
<div class="a" style="left:1006px;top:421px;width:1px;height:27px;background:#d4d4d4;"></div>
<div class="a" style="left:1189px;top:421px;width:1px;height:27px;background:#d4d4d4;"></div>
<div class="a" style="left:1441px;top:421px;width:1px;height:27px;background:#d4d4d4;"></div>
<div class="a" style="left:146px;top:477px;width:1px;height:27px;background:#d4d4d4;"></div>
<div class="a" style="left:275px;top:477px;width:1px;height:27px;background:#d4d4d4;"></div>
<div class="a" style="left:448px;top:477px;width:1px;height:27px;background:#d4d4d4;"></div>
<div class="a" style="left:823px;top:477px;width:1px;height:27px;background:#d4d4d4;"></div>
<div class="a" style="left:1006px;top:477px;width:1px;height:27px;background:#d4d4d4;"></div>
<div class="a" style="left:1189px;top:477px;width:1px;height:27px;background:#d4d4d4;"></div>
<div class="a" style="left:1441px;top:477px;width:1px;height:27px;background:#d4d4d4;"></div>
<div class="a" style="left:146px;top:533px;width:1px;height:27px;background:#d4d4d4;"></div>
<div class="a" style="left:275px;top:533px;width:1px;height:27px;background:#d4d4d4;"></div>
<div class="a" style="left:448px;top:533px;width:1px;height:27px;background:#d4d4d4;"></div>
<div class="a" style="left:823px;top:533px;width:1px;height:27px;background:#d4d4d4;"></div>
<div class="a" style="left:1006px;top:533px;width:1px;height:27px;background:#d4d4d4;"></div>
<div class="a" style="left:1189px;top:533px;width:1px;height:27px;background:#d4d4d4;"></div>
<div class="a" style="left:1441px;top:533px;width:1px;height:27px;background:#d4d4d4;"></div>
<div class="a" style="left:146px;top:589px;width:1px;height:27px;background:#d4d4d4;"></div>
<div class="a" style="left:275px;top:589px;width:1px;height:27px;background:#d4d4d4;"></div>
<div class="a" style="left:448px;top:589px;width:1px;height:27px;background:#d4d4d4;"></div>
<div class="a" style="left:823px;top:589px;width:1px;height:27px;background:#d4d4d4;"></div>
<div class="a" style="left:1006px;top:589px;width:1px;height:27px;background:#d4d4d4;"></div>
<div class="a" style="left:1189px;top:589px;width:1px;height:27px;background:#d4d4d4;"></div>
<div class="a" style="left:1441px;top:589px;width:1px;height:27px;background:#d4d4d4;"></div>
<div class="a" style="left:42px;top:0;width:1px;height:597px;background:#a0a0a0;"></div>
</div>
<div class="a" style="left:1889px;top:317px;width:31px;height:597px;background:#e6e6e6;"></div>
<div class="a" style="left:1890px;top:317px;width:27px;height:597px;background:#efefef;"></div>
<div class="a" style="left:1889px;top:345px;width:1px;height:569px;background:#9c9c9c;"></div>
<div class="a" style="left:1892px;top:319px;width:25px;height:25px;background:#fff;border:1px solid #959595;box-sizing:border-box;"></div>
<svg style="left:1899px;top:328px" width="11" height="6"><path d="M0 6H11L5.5 0Z" fill="#000"/></svg>
<div class="a" style="left:1892px;top:588px;width:25px;height:27px;background:#fff;border:1px solid #8f8f8f;box-sizing:border-box;"></div>
<div class="a" style="left:0px;top:914px;width:1920px;height:34px;background:#e6e6e6;"></div>
<div class="a" style="left:0px;top:914px;width:1889px;height:1px;background:#ababab;"></div>
<div class="a" style="left:1168px;top:915px;width:721px;height:29px;background:#f0f0f0;"></div>
<div class="a" style="left:118px;top:914px;width:147px;height:30px;background:#fff;border:1px solid #c6c6c6;box-sizing:border-box;border-top:none;border-bottom:2px solid #217346;"></div>
<span class="a t" style="top:918.00px;font-size:18.5px;line-height:21px;color:#217346;font-weight:700;letter-spacing:0.490px;left:130.5px;">Final Filtered</span>
<svg style="left:29px;top:926px" width="7" height="11"><path d="M6.5 0V10.5L0 5.25Z" fill="#c3c3c3"/></svg>
<svg style="left:64px;top:926px" width="7" height="11"><path d="M0 0V10.5L6.5 5.25Z" fill="#c3c3c3"/></svg>
<svg style="left:303px;top:919px" width="24" height="24"><circle cx="12" cy="12" r="10.3" fill="none" stroke="#7a7a7a" stroke-width="1.3"/><path d="M12 7V17M7 12H17" stroke="#7a7a7a" stroke-width="1.4"/></svg>
<div class="a" style="left:1147.5px;top:923.5px;width:3.6px;height:2.6px;background:#b3b3b3;"></div>
<div class="a" style="left:1147.5px;top:928.2px;width:3.6px;height:2.6px;background:#b3b3b3;"></div>
<div class="a" style="left:1147.5px;top:932.9px;width:3.6px;height:2.6px;background:#b3b3b3;"></div>
<div class="a" style="left:1147.5px;top:937.6px;width:3.6px;height:2.6px;background:#b3b3b3;"></div>
<div class="a" style="left:1168px;top:918px;width:25px;height:25px;background:#fff;border:1px solid #999;box-sizing:border-box;"></div>
<svg style="left:1176px;top:925px" width="7" height="11"><path d="M6.5 0V10.5L0 5.25Z" fill="#222"/></svg>
<div class="a" style="left:1192px;top:918px;width:123px;height:25px;background:#fff;border:1px solid #999;box-sizing:border-box;"></div>
<div class="a" style="left:1866px;top:918px;width:25px;height:25px;background:#fff;border:1px solid #999;box-sizing:border-box;"></div>
<svg style="left:1875px;top:925px" width="7" height="11"><path d="M0 0V10.5L6.5 5.25Z" fill="#222"/></svg>
<div class="a" style="left:0px;top:948px;width:1920px;height:33px;background:#f3f3f3;"></div>
<div class="a" style="left:0px;top:948px;width:1920px;height:1px;background:#dadada;"></div>
<span class="a t" style="top:957.00px;font-size:15.5px;line-height:17px;color:#444;letter-spacing:-0.562px;left:10.5px;">Ready</span>
<span class="a t" style="top:957.00px;font-size:15.5px;line-height:17px;color:#444;letter-spacing:-0.115px;left:109px;">Accessibility: Investigate</span>
<svg style="left:0;top:0" width="1" height="1"><g fill="none" stroke="#4a4a4a">
<path d="M92.2 956.2A9.1 9.1 0 0 0 92.2 974.3" stroke-width="1.6" stroke-dasharray="4.4 1.6" transform="rotate(6 93.4 965.2)"/>
<path d="M91.8 955.2V963" stroke-width="1.3"/><path d="M89.6 962.2H94L91.8 965.2Z" fill="#4a4a4a" stroke="none"/>
<path d="M94.6 963.5H100" stroke-width="1.3"/><path d="M99.4 960.9V966.1L102.2 963.5Z" fill="#4a4a4a" stroke="none"/>
<path d="M93.2 967.2L103.6 976.2" stroke-width="2" stroke="#444"/>
<path d="M102.6 967.4L98.4 970.6" stroke-width="1.1" stroke="#444"/><path d="M98.6 970.4L92.8 975.8" stroke-width="2.4" stroke="#444"/>
</g></svg>
<div class="a" style="left:1475px;top:949px;width:60px;height:32px;background:#c6c6c6;"></div>
<svg style="left:1495px;top:955px" width="20" height="20"><g fill="none" stroke="#666" stroke-width="1.2"><rect x="0.6" y="0.6" width="18.4" height="18.4"/><path d="M6.7 0.6V19M12.9 0.6V19M0.6 6.7H19M0.6 12.9H19"/></g></svg>
<svg style="left:1555px;top:955px" width="20" height="20"><g fill="none" stroke="#666" stroke-width="1.2"><rect x="0.6" y="0.6" width="18.4" height="18.4"/><rect x="4.6" y="4.6" width="10.4" height="10.4"/><path d="M7 8H13M7 10.5H13M7 13H13" stroke-width="1"/></g></svg>
<svg style="left:1615px;top:955px" width="20" height="19"><g fill="none" stroke="#666" stroke-width="1.2"><rect x="0.6" y="0.6" width="18.4" height="17"/><path d="M6.7 0.6V9.5M12.9 0.6V9.5M0.6 9.5H12.9"/></g></svg>
<div class="a" style="left:1663px;top:964px;width:11px;height:2px;background:#555;height:1.5px;"></div>
<div class="a" style="left:1683px;top:964px;width:148px;height:2px;background:#333;"></div>
<div class="a" style="left:1753px;top:956px;width:8px;height:17px;background:#444;"></div>
<div class="a" style="left:1839px;top:964px;width:11px;height:2px;background:#555;height:1.5px;"></div>
<div class="a" style="left:1844px;top:959px;width:2px;height:11px;background:#555;width:1.5px;"></div>
<span class="a t" style="top:957.00px;font-size:15.5px;line-height:17px;color:#444;letter-spacing:-0.289px;left:1870.5px;">100%</span>
<div class="a" style="left:0px;top:981px;width:1920px;height:11px;background:linear-gradient(90deg,#2a2c31,#34363b 50%,#3b3d42);"></div>
<div class="a" style="left:0px;top:981px;width:72px;height:11px;background:#2b2b2d;"></div>
<div class="a" style="left:73px;top:981px;width:430px;height:11px;background:#f1f1f1;border:1px solid #bdbdbd;box-sizing:border-box;"></div>
<div class="a" style="left:409px;top:985px;width:29px;height:7px;overflow:hidden;"><div class="a" style="left:0;top:0;width:29px;height:29px;border-radius:50%;background:radial-gradient(circle at 50% 30%,#8aa2ff,#4a5bd8);"></div></div>
<div class="a" style="left:466px;top:986px;width:23px;height:6px;overflow:hidden;"><div class="a" style="left:0;top:0;width:24px;height:24px;border-radius:50%;background:radial-gradient(circle at 40% 30%,#ffb18a,#e2553f);"></div></div>
<div class="a" style="left:449px;top:989px;width:4px;height:4px;background:#dcdbc8;border-radius:50%;"></div>
<div class="a" style="left:880px;top:981px;width:73px;height:11px;background:#4c4e53;"></div>
<div class="a" style="left:1757px;top:989px;width:62px;height:3px;overflow:hidden;"><span class="a t" style="left:0;top:0;font-size:15px;line-height:15px;color:#fff;">1:46 PM</span></div>
<div class="a" style="left:1913px;top:981px;width:1px;height:11px;background:#7b7d82;"></div>
<div class="a" style="left:1892px;top:891px;width:25px;height:25px;background:#e2f0e8;border:1px solid #86bf9f;box-sizing:border-box;"></div>
<svg style="left:1899px;top:901px" width="11" height="6"><path d="M0 0H11L5.5 6Z" fill="#000"/></svg>
<span class="a t" style="left:1678px;top:227px;font-size:50.5px;line-height:60px;color:#e21f26;font-family:'Liberation Sans','DejaVu Sans',sans-serif;direction:rtl;unicode-bidi:plaintext;">كشف 10</span>
<div class="a" style="left:810.0px;top:117px;width:360px;height:136px;transform:rotate(-21.8deg);transform-origin:50% 50%;color:#e21f26;font-family:'Liberation Sans','DejaVu Sans',sans-serif;font-size:51.5px;line-height:68px;text-align:center;direction:rtl;white-space:nowrap;"><div>#لن_نصمت</div><div>#وين_الفلوس</div></div>
</body></html>
